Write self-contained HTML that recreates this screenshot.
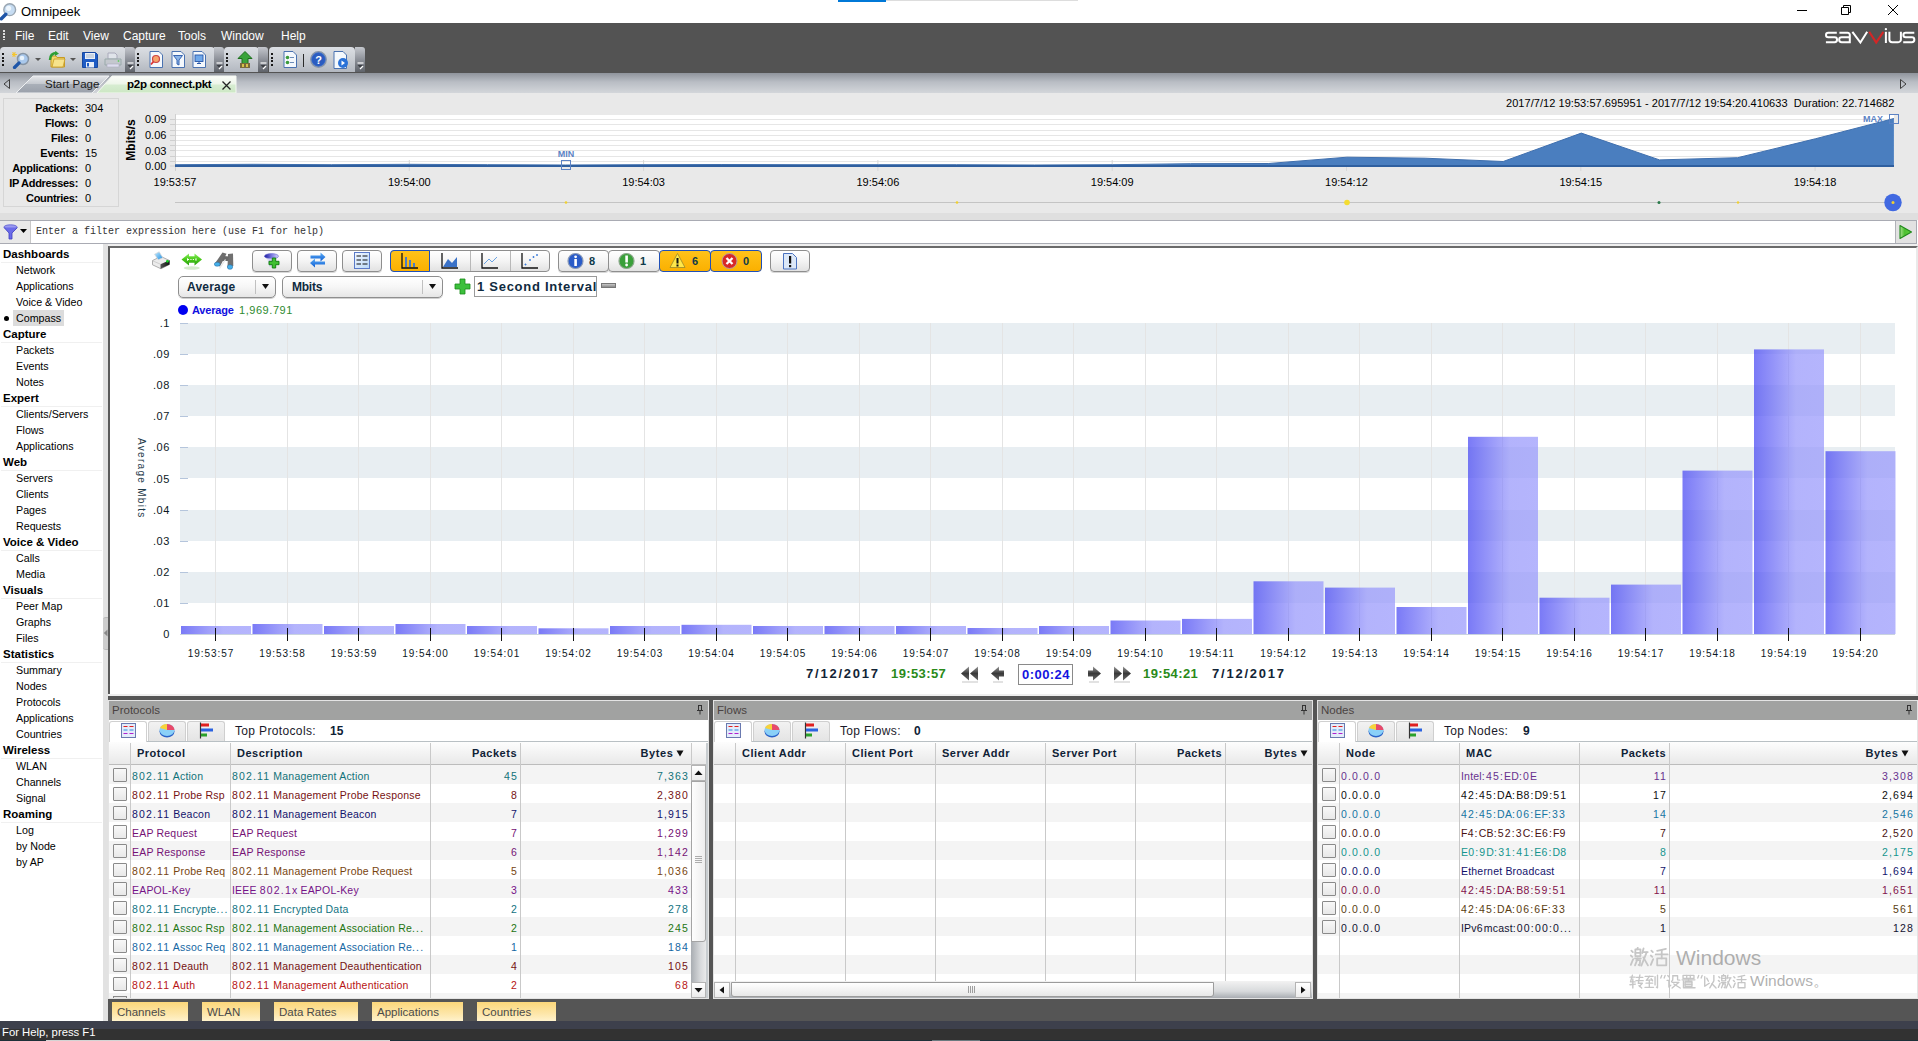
<!DOCTYPE html>
<html><head><meta charset="utf-8">
<style>
*{margin:0;padding:0;box-sizing:border-box}
html,body{width:1918px;height:1041px;overflow:hidden;background:#fff;font-family:"Liberation Sans",sans-serif;font-size:12px;color:#000;position:relative}
.a{position:absolute}
.t{position:absolute;white-space:nowrap;line-height:1}
#title{left:0;top:0;width:1918px;height:23px;background:#fff}
#menu{left:0;top:23px;width:1918px;height:24px;background:#535353;color:#fff;font-size:12px}
#tool{left:0;top:47px;width:1918px;height:26px;background:#535353}
.tg{position:absolute;top:0;height:25px;border-radius:4px 4px 0 0;background:linear-gradient(#dcdfe4,#c9cdd3 50%,#b3b8c0)}
.tgo{position:absolute;top:0;height:25px;width:10px;border-radius:0 3px 0 0;background:linear-gradient(#c4c7cd,#8d9199 50%,#5f636a)}
#tabs{left:0;top:73px;width:1918px;height:20px;background:linear-gradient(#8f949c,#b9bdc4 45%,#d3d6da)}
#summ{left:0;top:93px;width:1918px;height:127px;background:#e9e9e9}
#filt{left:0;top:220px;width:1917px;height:24px;background:#fff;border:1px solid #a9abb3;border-left:none}
#nav{left:0;top:244px;width:103px;height:777px;background:#fff}
#split{left:103px;top:244px;width:5px;height:777px;background:#e2e2e2}
#dash{left:108px;top:246px;width:1810px;height:450px;background:#fff;border-left:2px solid #5a5a5a;border-top:2px solid #6a6a6a;border-right:2px solid #eaeaea}
#status{left:0;top:1021px;width:1918px;height:20px;background:linear-gradient(#3d404c 0,#3d404c 8px,#323232 8px);color:#fff;font-size:12px}
</style></head><body>
<!-- TITLE -->
<div id="title" class="a">
  <svg class="a" style="left:0;top:1px" width="18" height="20" viewBox="0 0 18 20">
    <circle cx="9.7" cy="8.7" r="5.9" fill="#c6dcf2" stroke="#9aa6b2" stroke-width="1.4"/>
    <circle cx="8.6" cy="7.3" r="2.6" fill="#eef6fd"/>
    <path d="M5.8 13.2L1.3 17.7" stroke="#1f56a8" stroke-width="3.4" stroke-linecap="round"/>
  </svg>
  <div class="t" style="left:21px;top:5px;font-size:13px">Omnipeek</div>
  <div class="a" style="left:838px;top:0;width:48px;height:2px;background:#0078d7"></div>
  <div class="a" style="left:886px;top:0;width:192px;height:1px;background:#ddd"></div>
  <div class="a" style="left:1797px;top:10px;width:10px;height:1px;background:#000"></div>
  <svg class="a" style="left:1841px;top:4px" width="12" height="12" viewBox="0 0 12 12"><path d="M0.5 3.5h7v7h-7z M2.5 3.5v-2h7v7h-2" fill="none" stroke="#000" stroke-width="1"/></svg>
  <svg class="a" style="left:1887px;top:4px" width="12" height="12" viewBox="0 0 12 12"><path d="M1 1L11 11M11 1L1 11" stroke="#000" stroke-width="1"/></svg>
</div>
<!-- MENU -->
<div id="menu" class="a">
  <div class="a" style="left:3px;top:7px;width:2px;height:10px;background-image:repeating-linear-gradient(#ddd 0 2px,transparent 2px 3px)"></div>
  <div class="t" style="left:15px;top:7px">File</div>
  <div class="t" style="left:48px;top:7px">Edit</div>
  <div class="t" style="left:83px;top:7px">View</div>
  <div class="t" style="left:123px;top:7px">Capture</div>
  <div class="t" style="left:178px;top:7px">Tools</div>
  <div class="t" style="left:221px;top:7px">Window</div>
  <div class="t" style="left:281px;top:7px">Help</div>
  <svg class="a" style="left:1820px;top:1px" width="98" height="24" viewBox="0 0 98 24">
    <g fill="none" stroke="#fff" stroke-width="2">
      <path d="M16.8 8.7H8.3A2.3 2.3 0 0 0 8.3 13.3H14.6A2.45 2.45 0 0 1 14.6 18.2H5.9"/>
      <path d="M19.4 8.7H27.6A2.2 2.2 0 0 1 29.8 10.9V18.2H21.6A2.45 2.45 0 0 1 21.6 13.3H29.8"/>
      <path d="M32.4 7.8L40.4 18.6L47.2 7.8"/>
      <path d="M65.9 7.8V19"/>
      <path d="M69.4 7.8V15.5A2.7 2.7 0 0 0 72.1 18.2H78.2A2.7 2.7 0 0 0 80.9 15.5V7.8"/>
      <path d="M94.3 8.7H85.7A2.3 2.3 0 0 0 85.7 13.3H91.9A2.45 2.45 0 0 1 91.9 18.2H83.2"/>
    </g>
    <path d="M49.2 7.8L56.2 18.6L63.4 7.8" fill="none" stroke="#d42626" stroke-width="2.1"/>
    <circle cx="65.9" cy="5.2" r="1.15" fill="#fff"/>
  </svg>
</div>
<!-- TOOLBAR -->
<div id="tool" class="a">
  <div class="tg" style="left:0;width:126px"></div><div class="tgo" style="left:125px"><svg class="a" style="left:2px;top:15px" width="7" height="8" viewBox="0 0 7 8"><path d="M0.5 1h6" stroke="#fff" stroke-width="1.2"/><path d="M0.5 3h6l-3 3z" fill="#3c3f45"/><path d="M3 7l3-3" stroke="#fff" stroke-width="1.2"/></svg></div>
  <div class="tg" style="left:135px;width:80px"></div><div class="tgo" style="left:214px"><svg class="a" style="left:2px;top:15px" width="7" height="8" viewBox="0 0 7 8"><path d="M0.5 1h6" stroke="#fff" stroke-width="1.2"/><path d="M0.5 3h6l-3 3z" fill="#3c3f45"/><path d="M3 7l3-3" stroke="#fff" stroke-width="1.2"/></svg></div>
  <div class="tg" style="left:224px;width:35px"></div><div class="tgo" style="left:258px"><svg class="a" style="left:2px;top:15px" width="7" height="8" viewBox="0 0 7 8"><path d="M0.5 1h6" stroke="#fff" stroke-width="1.2"/><path d="M0.5 3h6l-3 3z" fill="#3c3f45"/><path d="M3 7l3-3" stroke="#fff" stroke-width="1.2"/></svg></div>
  <div class="tg" style="left:269px;width:86px"></div><div class="tgo" style="left:355px"><svg class="a" style="left:2px;top:15px" width="7" height="8" viewBox="0 0 7 8"><path d="M0.5 1h6" stroke="#fff" stroke-width="1.2"/><path d="M0.5 3h6l-3 3z" fill="#3c3f45"/><path d="M3 7l3-3" stroke="#fff" stroke-width="1.2"/></svg></div>
  <div class="a" style="left:2px;top:6px;width:2px;height:13px;background-image:repeating-linear-gradient(#1a1a1a 0 2px,transparent 2px 3.5px)"></div><div class="a" style="left:137px;top:6px;width:2px;height:13px;background-image:repeating-linear-gradient(#1a1a1a 0 2px,transparent 2px 3.5px)"></div><div class="a" style="left:226px;top:6px;width:2px;height:13px;background-image:repeating-linear-gradient(#1a1a1a 0 2px,transparent 2px 3.5px)"></div><div class="a" style="left:271px;top:6px;width:2px;height:13px;background-image:repeating-linear-gradient(#1a1a1a 0 2px,transparent 2px 3.5px)"></div>
  <svg class="a" style="left:12px;top:4px" width="19" height="18" viewBox="0 0 19 18">
    <circle cx="11" cy="8" r="5.5" fill="#a9c8ec" stroke="#8795a5" stroke-width="1.5"/><circle cx="10" cy="7" r="2.3" fill="#e9f3fc"/>
    <path d="M7 12L2.5 16.5" stroke="#1f56a8" stroke-width="3.2" stroke-linecap="round"/>
    <path d="M2 1v5M0 3.5h5M0.5 1.5l3 4M3.5 1.5l-3 4" stroke="#f6c52a" stroke-width="1"/>
  </svg>
  <svg class="a" style="left:35px;top:11px" width="6" height="4"><path d="M0 0h6l-3 3z" fill="#555"/></svg>
  <svg class="a" style="left:48px;top:4px" width="18" height="17" viewBox="0 0 18 17">
    <path d="M3 5h5l1 1.5h7.5v9.5h-13.5z" fill="#f2d86a" stroke="#c79a24" stroke-width="1"/>
    <path d="M6 8h11l-2 8h-11z" fill="#f7e38c" stroke="#c79a24" stroke-width="0.8"/>
    <path d="M2 9c0-5 3-7 7-7" stroke="#2e9e34" stroke-width="2.5" fill="none"/><path d="M7 0l4 2.5-4 2.5z" fill="#2e9e34"/>
  </svg>
  <svg class="a" style="left:70px;top:11px" width="6" height="4"><path d="M0 0h6l-3 3z" fill="#555"/></svg>
  <svg class="a" style="left:82px;top:5px" width="16" height="16" viewBox="0 0 16 16">
    <path d="M0.5 0.5h13l2 2v13h-15z" fill="#1f5cc4" stroke="#1848a0"/><rect x="3" y="1" width="10" height="6" fill="#e8eef8"/><path d="M4 3h8M4 5h8" stroke="#9ab" stroke-width="0.8"/><rect x="4" y="10" width="8" height="5.5" fill="#e8eef8"/><rect x="5" y="11" width="2" height="3.5" fill="#1f5cc4"/>
  </svg>
  <svg class="a" style="left:104px;top:5px" width="18" height="16" viewBox="0 0 18 16">
    <path d="M4 1h7l2 2v4h-9z" fill="#e0e4ea" stroke="#aab"/><path d="M1 7h16v6h-16z" fill="#c4c8ce" stroke="#9aa"/><rect x="3" y="12" width="12" height="3" fill="#dde" stroke="#aab" stroke-width="0.6"/><circle cx="14.5" cy="9" r="0.9" fill="#6c6"/>
  </svg>
  <svg class="a" style="left:148px;top:4px" width="16" height="17" viewBox="0 0 16 17"><path d="M2 0.5h9l3.5 3.5v12.5h-12.5z" fill="#f4f8fc" stroke="#4a72b0" stroke-width="1"/><circle cx="8" cy="8" r="3.5" fill="#f6a26a" stroke="#c44" stroke-width="1.2"/><path d="M5.5 10.5l-2.5 3" stroke="#d33" stroke-width="1.8"/></svg>
  <svg class="a" style="left:170px;top:4px" width="16" height="17" viewBox="0 0 16 17"><path d="M2 0.5h9l3.5 3.5v12.5h-12.5z" fill="#f4f8fc" stroke="#4a72b0" stroke-width="1"/><path d="M3.5 4.5h9l-3.5 4.5v5l-2-1v-4z" fill="#8ab4e8" stroke="#2857a8" stroke-width="0.9"/></svg>
  <svg class="a" style="left:191px;top:4px" width="16" height="17" viewBox="0 0 16 17"><path d="M2 0.5h9l3.5 3.5v12.5h-12.5z" fill="#f4f8fc" stroke="#4a72b0" stroke-width="1"/><rect x="4" y="4" width="8" height="6.5" fill="#6fa8ea" stroke="#2857a8" stroke-width="0.9"/><path d="M6 12.5h4M8 10.5v2" stroke="#2857a8" stroke-width="1"/></svg>
  <svg class="a" style="left:236px;top:4px" width="18" height="18" viewBox="0 0 18 18">
    <path d="M9 0.5l7 7h-4v5h-6v-5h-4z" fill="#3aa33a" stroke="#1d6e1d" stroke-width="1"/><rect x="4" y="12" width="10" height="5" fill="#7a6a3a"/><rect x="6" y="13" width="2" height="3" fill="#d8c24a"/><rect x="10" y="13" width="2" height="3" fill="#d8c24a"/>
  </svg>
  <svg class="a" style="left:282px;top:4px" width="16" height="17" viewBox="0 0 16 17"><path d="M2 0.5h9l3.5 3.5v12.5h-12.5z" fill="#f4f8fc" stroke="#4a72b0" stroke-width="1"/><circle cx="5.5" cy="6.5" r="1.8" fill="#3b9b3b"/><circle cx="5.5" cy="11.5" r="1.8" fill="#3b9b3b"/><path d="M8 6.5h4M8 11.5h4" stroke="#6c8cb8" stroke-width="1"/></svg>
  <div class="a" style="left:303px;top:7px;width:1px;height:13px;background:#2a2a2a"></div>
  <svg class="a" style="left:310px;top:4px" width="17" height="17" viewBox="0 0 17 17">
    <circle cx="8.5" cy="8.5" r="7.8" fill="#3b6fcf" stroke="#8a96a8" stroke-width="1.2"/><circle cx="8.5" cy="8.5" r="6.5" fill="#2c5cc0"/>
    <text x="8.5" y="13" text-anchor="middle" font-family="Liberation Sans" font-weight="bold" font-size="11" fill="#fff">?</text>
  </svg>
  <svg class="a" style="left:333px;top:4px" width="17" height="18" viewBox="0 0 17 18">
    <path d="M1 0.5h9l3.5 3.5v13.5h-12.5z" fill="#f4f8fc" stroke="#4a72b0" stroke-width="1"/><circle cx="10" cy="12" r="5" fill="#2a72d8"/><path d="M8.5 9.5l3.5 2.5-3.5 2.5z" fill="#fff"/>
  </svg>
</div>
<!-- TABS -->
<div id="tabs" class="a">
  <svg class="a" style="left:3px;top:6px" width="8" height="10" viewBox="0 0 8 10"><path d="M6.5 0.5L1 5l5.5 4.5z" fill="none" stroke="#3c3c3c" stroke-width="1"/></svg>
  <svg class="a" style="left:15px;top:2px" width="225" height="18" viewBox="0 0 225 18">
    <defs>
      <linearGradient id="gs" x1="0" y1="0" x2="0" y2="1"><stop offset="0" stop-color="#e6e8eb"/><stop offset="0.45" stop-color="#c5c9cf"/><stop offset="0.5" stop-color="#a9afb8"/><stop offset="1" stop-color="#9aa0aa"/></linearGradient>
      <linearGradient id="gp" x1="0" y1="0" x2="0" y2="1"><stop offset="0" stop-color="#fcfdfa"/><stop offset="0.45" stop-color="#eef6ea"/><stop offset="0.55" stop-color="#d6ecd0"/><stop offset="1" stop-color="#cce7c4"/></linearGradient>
    </defs>
    <path d="M1 18 L18 1 H94 L77 18 Z" fill="url(#gs)" stroke="#eef0f2" stroke-width="1"/>
    <path d="M82 18 L97 1 H221 V18 Z" fill="url(#gp)" stroke="#f4f8f2" stroke-width="1"/>
  </svg>
  <div class="t" style="left:45px;top:6px;font-size:11.5px;color:#1a1a1a">Start Page</div>
  <div class="t" style="left:127px;top:5.5px;font-size:11.5px;font-weight:bold;letter-spacing:-0.25px;color:#000">p2p connect.pkt</div>
  <svg class="a" style="left:222px;top:8px" width="9" height="9" viewBox="0 0 9 9"><path d="M0.5 0.5L8.5 8.5M8.5 0.5L0.5 8.5" stroke="#222" stroke-width="1.3"/></svg>
  <svg class="a" style="left:1899px;top:6px" width="8" height="10" viewBox="0 0 8 10"><path d="M1.5 0.5L7 5l-5.5 4.5z" fill="none" stroke="#3c3c3c" stroke-width="1"/></svg>
</div>
<!-- SUMMARY -->
<div id="summ" class="a">
  <div class="a" style="left:3px;top:5px;width:116px;height:109px;border:1px solid #d6d6d6"></div>
  <div class="t" style="left:0;top:10px;width:78px;text-align:right;font-weight:bold;font-size:11px;letter-spacing:-0.3px">Packets:</div><div class="t" style="left:85px;top:10px;font-size:11px">304</div><div class="t" style="left:0;top:25px;width:78px;text-align:right;font-weight:bold;font-size:11px;letter-spacing:-0.3px">Flows:</div><div class="t" style="left:85px;top:25px;font-size:11px">0</div><div class="t" style="left:0;top:40px;width:78px;text-align:right;font-weight:bold;font-size:11px;letter-spacing:-0.3px">Files:</div><div class="t" style="left:85px;top:40px;font-size:11px">0</div><div class="t" style="left:0;top:55px;width:78px;text-align:right;font-weight:bold;font-size:11px;letter-spacing:-0.3px">Events:</div><div class="t" style="left:85px;top:55px;font-size:11px">15</div><div class="t" style="left:0;top:70px;width:78px;text-align:right;font-weight:bold;font-size:11px;letter-spacing:-0.3px">Applications:</div><div class="t" style="left:85px;top:70px;font-size:11px">0</div><div class="t" style="left:0;top:85px;width:78px;text-align:right;font-weight:bold;font-size:11px;letter-spacing:-0.3px">IP Addresses:</div><div class="t" style="left:85px;top:85px;font-size:11px">0</div><div class="t" style="left:0;top:100px;width:78px;text-align:right;font-weight:bold;font-size:11px;letter-spacing:-0.3px">Countries:</div><div class="t" style="left:85px;top:100px;font-size:11px">0</div>
  <div class="a" style="left:0;top:120px;width:1918px;height:7px;background:#dfdfdf"></div>
  <div class="t" style="left:108px;top:41px;transform:rotate(-90deg);transform-origin:center;width:46px;text-align:center;font-weight:bold;font-size:12px">Mbits/s</div>
  <div class="t" style="left:145px;top:21px;font-size:11px">0.09</div>
  <div class="t" style="left:145px;top:37px;font-size:11px">0.06</div>
  <div class="t" style="left:145px;top:53px;font-size:11px">0.03</div>
  <div class="t" style="left:145px;top:68px;font-size:11px">0.00</div>
  <div class="t" style="left:153.5px;top:84px;width:43px;text-align:center;font-size:11px">19:53:57</div><div class="t" style="left:387.8px;top:84px;width:43px;text-align:center;font-size:11px">19:54:00</div><div class="t" style="left:622.1px;top:84px;width:43px;text-align:center;font-size:11px">19:54:03</div><div class="t" style="left:856.4px;top:84px;width:43px;text-align:center;font-size:11px">19:54:06</div><div class="t" style="left:1090.7px;top:84px;width:43px;text-align:center;font-size:11px">19:54:09</div><div class="t" style="left:1325.0px;top:84px;width:43px;text-align:center;font-size:11px">19:54:12</div><div class="t" style="left:1559.3px;top:84px;width:43px;text-align:center;font-size:11px">19:54:15</div><div class="t" style="left:1793.6px;top:84px;width:43px;text-align:center;font-size:11px">19:54:18</div>
  <div class="t" style="left:1506px;top:5px;font-size:11px;letter-spacing:0.05px">2017/7/12 19:53:57.695951 - 2017/7/12 19:54:20.410633 &nbsp;Duration: 22.714682</div>
  <svg class="a" style="left:0;top:-93px" width="1918" height="220" viewBox="0 0 1918 220">
    <rect x="175" y="115" width="1719" height="51" fill="#fff"/>
    <path d="M175 119.5H1894" stroke="#e6e6e6" stroke-width="1"/><path d="M175 124.5H1894" stroke="#e6e6e6" stroke-width="1"/><path d="M175 130.5H1894" stroke="#e6e6e6" stroke-width="1"/><path d="M175 135.5H1894" stroke="#e6e6e6" stroke-width="1"/><path d="M175 140.5H1894" stroke="#e6e6e6" stroke-width="1"/><path d="M175 145.5H1894" stroke="#e6e6e6" stroke-width="1"/><path d="M175 150.5H1894" stroke="#e6e6e6" stroke-width="1"/><path d="M175 156.5H1894" stroke="#e6e6e6" stroke-width="1"/><path d="M175 161.5H1894" stroke="#e6e6e6" stroke-width="1"/>
    <path d="M175.5 114V171" stroke="#d0d0d0" stroke-width="1"/>
    <path d="M170 119.5H176" stroke="#cfcfcf" stroke-width="1"/><path d="M170 124.5H176" stroke="#cfcfcf" stroke-width="1"/><path d="M170 130.5H176" stroke="#cfcfcf" stroke-width="1"/><path d="M170 135.5H176" stroke="#cfcfcf" stroke-width="1"/><path d="M170 140.5H176" stroke="#cfcfcf" stroke-width="1"/><path d="M170 145.5H176" stroke="#cfcfcf" stroke-width="1"/><path d="M170 150.5H176" stroke="#cfcfcf" stroke-width="1"/><path d="M170 156.5H176" stroke="#cfcfcf" stroke-width="1"/><path d="M170 161.5H176" stroke="#cfcfcf" stroke-width="1"/><path d="M170 166.0H176" stroke="#cfcfcf" stroke-width="1"/><path d="M409.3 160V171" stroke="#d8d8d8" stroke-width="1"/><path d="M643.6 160V171" stroke="#d8d8d8" stroke-width="1"/><path d="M877.9 160V171" stroke="#d8d8d8" stroke-width="1"/><path d="M1112.2 160V171" stroke="#d8d8d8" stroke-width="1"/><path d="M1346.5 160V171" stroke="#d8d8d8" stroke-width="1"/><path d="M1580.8 160V171" stroke="#d8d8d8" stroke-width="1"/><path d="M1815.1 160V171" stroke="#d8d8d8" stroke-width="1"/>
    <polygon points="175,166 175.0,164.7 253.1,164.3 331.3,164.7 409.4,164.3 487.5,164.7 565.6,165.0 643.8,164.7 721.9,164.5 800.0,164.7 878.2,164.7 956.3,164.7 1034.4,165.0 1112.6,164.7 1190.7,163.7 1268.8,163.5 1346.9,157.2 1425.1,158.2 1503.2,161.5 1581.3,133.1 1659.5,159.9 1737.6,157.7 1815.7,138.7 1893.9,118.5 1893.9,166" fill="#4a7ebf"/>
    <polyline points="175.0,164.7 253.1,164.3 331.3,164.7 409.4,164.3 487.5,164.7 565.6,165.0 643.8,164.7 721.9,164.5 800.0,164.7 878.2,164.7 956.3,164.7 1034.4,165.0 1112.6,164.7 1190.7,163.7 1268.8,163.5 1346.9,157.2 1425.1,158.2 1503.2,161.5 1581.3,133.1 1659.5,159.9 1737.6,157.7 1815.7,138.7 1893.9,118.5" fill="none" stroke="#3f6fae" stroke-width="1"/>
    <path d="M175 166H1894" stroke="#2f5f9f" stroke-width="2"/>
    <path d="M175 202.5H1893" stroke="#c4c4c4" stroke-width="1"/>
    <rect x="561.5" y="160.5" width="9" height="9" fill="none" stroke="#5b82c4" stroke-width="1"/>
    <text x="566" y="157" text-anchor="middle" font-family="Liberation Sans" font-size="9" font-weight="bold" fill="#5b82c4">MIN</text>
    <rect x="1889.5" y="114.5" width="9" height="9" fill="none" stroke="#5b82c4" stroke-width="1"/>
    <text x="1873" y="122" text-anchor="middle" font-family="Liberation Sans" font-size="9" font-weight="bold" fill="#5b82c4">MAX</text>
    <circle cx="566" cy="202.5" r="1.3" fill="#f0d030"/>
    <circle cx="957" cy="202.5" r="1.3" fill="#f0d030"/>
    <circle cx="1347" cy="202.5" r="2.8" fill="#f4dc30"/>
    <circle cx="1659" cy="202.5" r="1.5" fill="#2a7a4a"/>
    <circle cx="1738" cy="202.5" r="1.2" fill="#f0d030"/>
    <circle cx="1893" cy="202.5" r="8.7" fill="#4169e1"/>
    <circle cx="1893" cy="202.5" r="1.5" fill="#f0d030"/>
  </svg>
</div>
<!-- FILTER -->
<div id="filt" class="a">
  <div class="a" style="left:0;top:0;width:31px;height:22px;background:#e9e9e9;border-right:1px solid #c8c8c8"></div>
  <svg class="a" style="left:3px;top:3px" width="26" height="16" viewBox="0 0 26 16">
    <ellipse cx="7.5" cy="3" rx="6.5" ry="2.2" fill="#9a9af0" stroke="#5a5ad0" stroke-width="0.8"/>
    <path d="M1 3.5L6 9v6h3V9l5.5-5.5" fill="#6b6be8" stroke="#3c3cc0" stroke-width="0.8"/>
    <path d="M17 5h7l-3.5 4z" fill="#000"/>
  </svg>
  <div class="t" style="left:36px;top:6px;font-family:'Liberation Mono',monospace;font-size:10px;color:#333">Enter a filter expression here (use F1 for help)</div>
  <div class="a" style="left:1895px;top:0;width:21px;height:22px;background:#e2e2e2;border-left:1px solid #b0b2b8"></div>
  <svg class="a" style="left:1898px;top:3px" width="16" height="16" viewBox="0 0 16 16"><defs><linearGradient id="pg" x1="0" x2="1"><stop offset="0" stop-color="#a8e090"/><stop offset="0.4" stop-color="#4cc030"/><stop offset="1" stop-color="#60d040"/></linearGradient></defs><path d="M2 1.5L13.5 8L2 14.5z" fill="url(#pg)" stroke="#1f8a1a" stroke-width="1.1" stroke-linejoin="round"/></svg>
</div>
<div class="a" style="left:0;top:244px;width:1918px;height:2px;background:#efefef"></div>
<div id="nav" class="a"><div class="t" style="left:3px;top:5px;font-size:11.5px;font-weight:bold">Dashboards</div><div class="a" style="left:1px;top:18px;width:101px;height:1px;background:#f0f0f0"></div><div class="t" style="left:16px;top:21px;font-size:10.7px">Network</div><div class="t" style="left:16px;top:37px;font-size:10.7px">Applications</div><div class="t" style="left:16px;top:53px;font-size:10.7px">Voice &amp; Video</div><div class="a" style="left:13px;top:66px;width:51px;height:16px;background:#dcdcdc"></div><div class="a" style="left:4px;top:72px;width:5px;height:5px;border-radius:50%;background:#000"></div><div class="t" style="left:16px;top:69px;font-size:10.7px">Compass</div><div class="t" style="left:3px;top:85px;font-size:11.5px;font-weight:bold">Capture</div><div class="a" style="left:1px;top:98px;width:101px;height:1px;background:#f0f0f0"></div><div class="t" style="left:16px;top:101px;font-size:10.7px">Packets</div><div class="t" style="left:16px;top:117px;font-size:10.7px">Events</div><div class="t" style="left:16px;top:133px;font-size:10.7px">Notes</div><div class="t" style="left:3px;top:149px;font-size:11.5px;font-weight:bold">Expert</div><div class="a" style="left:1px;top:162px;width:101px;height:1px;background:#f0f0f0"></div><div class="t" style="left:16px;top:165px;font-size:10.7px">Clients/Servers</div><div class="t" style="left:16px;top:181px;font-size:10.7px">Flows</div><div class="t" style="left:16px;top:197px;font-size:10.7px">Applications</div><div class="t" style="left:3px;top:213px;font-size:11.5px;font-weight:bold">Web</div><div class="a" style="left:1px;top:226px;width:101px;height:1px;background:#f0f0f0"></div><div class="t" style="left:16px;top:229px;font-size:10.7px">Servers</div><div class="t" style="left:16px;top:245px;font-size:10.7px">Clients</div><div class="t" style="left:16px;top:261px;font-size:10.7px">Pages</div><div class="t" style="left:16px;top:277px;font-size:10.7px">Requests</div><div class="t" style="left:3px;top:293px;font-size:11.5px;font-weight:bold">Voice &amp; Video</div><div class="a" style="left:1px;top:306px;width:101px;height:1px;background:#f0f0f0"></div><div class="t" style="left:16px;top:309px;font-size:10.7px">Calls</div><div class="t" style="left:16px;top:325px;font-size:10.7px">Media</div><div class="t" style="left:3px;top:341px;font-size:11.5px;font-weight:bold">Visuals</div><div class="a" style="left:1px;top:354px;width:101px;height:1px;background:#f0f0f0"></div><div class="t" style="left:16px;top:357px;font-size:10.7px">Peer Map</div><div class="t" style="left:16px;top:373px;font-size:10.7px">Graphs</div><div class="t" style="left:16px;top:389px;font-size:10.7px">Files</div><div class="t" style="left:3px;top:405px;font-size:11.5px;font-weight:bold">Statistics</div><div class="a" style="left:1px;top:418px;width:101px;height:1px;background:#f0f0f0"></div><div class="t" style="left:16px;top:421px;font-size:10.7px">Summary</div><div class="t" style="left:16px;top:437px;font-size:10.7px">Nodes</div><div class="t" style="left:16px;top:453px;font-size:10.7px">Protocols</div><div class="t" style="left:16px;top:469px;font-size:10.7px">Applications</div><div class="t" style="left:16px;top:485px;font-size:10.7px">Countries</div><div class="t" style="left:3px;top:501px;font-size:11.5px;font-weight:bold">Wireless</div><div class="a" style="left:1px;top:514px;width:101px;height:1px;background:#f0f0f0"></div><div class="t" style="left:16px;top:517px;font-size:10.7px">WLAN</div><div class="t" style="left:16px;top:533px;font-size:10.7px">Channels</div><div class="t" style="left:16px;top:549px;font-size:10.7px">Signal</div><div class="t" style="left:3px;top:565px;font-size:11.5px;font-weight:bold">Roaming</div><div class="a" style="left:1px;top:578px;width:101px;height:1px;background:#f0f0f0"></div><div class="t" style="left:16px;top:581px;font-size:10.7px">Log</div><div class="t" style="left:16px;top:597px;font-size:10.7px">by Node</div><div class="t" style="left:16px;top:613px;font-size:10.7px">by AP</div></div>
<div id="split" class="a"><div class="a" style="left:0;top:373px;width:5px;height:33px;border-radius:3px 0 0 3px;background:#cdcdcd;border-top:1px solid #b8b8b8;border-bottom:1px solid #b8b8b8"></div><svg class="a" style="left:0;top:385px" width="5" height="8"><path d="M4.5 0.5L0.8 4l3.7 3.5z" fill="#888"/></svg></div>
<div id="dash" class="a"></div>
<!-- DASH -->
<svg class="a" style="left:0;top:0" width="1918" height="700" viewBox="0 0 1918 700">
<defs><linearGradient id="bg" x1="0" y1="0" x2="1" y2="0"><stop offset="0" stop-color="rgb(70,70,243)" stop-opacity="0.72"/><stop offset="0.6" stop-color="rgb(150,150,251)" stop-opacity="0.72"/><stop offset="1" stop-color="rgb(152,152,252)" stop-opacity="0.72"/></linearGradient></defs>
<rect x="180" y="572" width="1715" height="31" fill="#e8eef2"/><rect x="180" y="510" width="1715" height="31" fill="#e8eef2"/><rect x="180" y="447" width="1715" height="31" fill="#e8eef2"/><rect x="180" y="385" width="1715" height="31" fill="#e8eef2"/><rect x="180" y="323" width="1715" height="31" fill="#e8eef2"/><path d="M215.5 323V634" stroke="#e4e4e4" stroke-width="1"/><path d="M287.5 323V634" stroke="#e4e4e4" stroke-width="1"/><path d="M358.5 323V634" stroke="#e4e4e4" stroke-width="1"/><path d="M430.5 323V634" stroke="#e4e4e4" stroke-width="1"/><path d="M501.5 323V634" stroke="#e4e4e4" stroke-width="1"/><path d="M573.5 323V634" stroke="#e4e4e4" stroke-width="1"/><path d="M644.5 323V634" stroke="#e4e4e4" stroke-width="1"/><path d="M716.5 323V634" stroke="#e4e4e4" stroke-width="1"/><path d="M787.5 323V634" stroke="#e4e4e4" stroke-width="1"/><path d="M859.5 323V634" stroke="#e4e4e4" stroke-width="1"/><path d="M930.5 323V634" stroke="#e4e4e4" stroke-width="1"/><path d="M1002.5 323V634" stroke="#e4e4e4" stroke-width="1"/><path d="M1073.5 323V634" stroke="#e4e4e4" stroke-width="1"/><path d="M1145.5 323V634" stroke="#e4e4e4" stroke-width="1"/><path d="M1216.5 323V634" stroke="#e4e4e4" stroke-width="1"/><path d="M1288.5 323V634" stroke="#e4e4e4" stroke-width="1"/><path d="M1359.5 323V634" stroke="#e4e4e4" stroke-width="1"/><path d="M1431.5 323V634" stroke="#e4e4e4" stroke-width="1"/><path d="M1502.5 323V634" stroke="#e4e4e4" stroke-width="1"/><path d="M1574.5 323V634" stroke="#e4e4e4" stroke-width="1"/><path d="M1645.5 323V634" stroke="#e4e4e4" stroke-width="1"/><path d="M1717.5 323V634" stroke="#e4e4e4" stroke-width="1"/><path d="M1788.5 323V634" stroke="#e4e4e4" stroke-width="1"/><path d="M1860.5 323V634" stroke="#e4e4e4" stroke-width="1"/><path d="M180 634.5H188" stroke="#b5c5dc" stroke-width="1"/><path d="M180 603.5H188" stroke="#b5c5dc" stroke-width="1"/><path d="M180 572.5H188" stroke="#b5c5dc" stroke-width="1"/><path d="M180 541.5H188" stroke="#b5c5dc" stroke-width="1"/><path d="M180 510.5H188" stroke="#b5c5dc" stroke-width="1"/><path d="M180 478.5H188" stroke="#b5c5dc" stroke-width="1"/><path d="M180 447.5H188" stroke="#b5c5dc" stroke-width="1"/><path d="M180 416.5H188" stroke="#b5c5dc" stroke-width="1"/><path d="M180 385.5H188" stroke="#b5c5dc" stroke-width="1"/><path d="M180 354.5H188" stroke="#b5c5dc" stroke-width="1"/><path d="M180 323.5H188" stroke="#b5c5dc" stroke-width="1"/><rect x="181.0" y="626.0" width="70.0" height="8.0" fill="url(#bg)"/><rect x="252.5" y="624.0" width="70.0" height="10.0" fill="url(#bg)"/><rect x="324.0" y="626.0" width="70.0" height="8.0" fill="url(#bg)"/><rect x="395.5" y="624.0" width="70.0" height="10.0" fill="url(#bg)"/><rect x="467.0" y="626.0" width="70.0" height="8.0" fill="url(#bg)"/><rect x="538.5" y="628.3" width="70.0" height="5.7" fill="url(#bg)"/><rect x="610.0" y="626.0" width="70.0" height="8.0" fill="url(#bg)"/><rect x="681.5" y="624.8" width="70.0" height="9.2" fill="url(#bg)"/><rect x="753.0" y="626.0" width="70.0" height="8.0" fill="url(#bg)"/><rect x="824.5" y="626.0" width="70.0" height="8.0" fill="url(#bg)"/><rect x="896.0" y="626.0" width="70.0" height="8.0" fill="url(#bg)"/><rect x="967.5" y="628.0" width="70.0" height="6.0" fill="url(#bg)"/><rect x="1039.0" y="626.0" width="70.0" height="8.0" fill="url(#bg)"/><rect x="1110.5" y="620.5" width="70.0" height="13.5" fill="url(#bg)"/><rect x="1182.0" y="618.9" width="70.0" height="15.1" fill="url(#bg)"/><rect x="1253.5" y="581.3" width="70.0" height="52.7" fill="url(#bg)"/><rect x="1325.0" y="587.6" width="70.0" height="46.4" fill="url(#bg)"/><rect x="1396.5" y="607.0" width="70.0" height="27.0" fill="url(#bg)"/><rect x="1468.0" y="436.8" width="70.0" height="197.2" fill="url(#bg)"/><rect x="1539.5" y="597.7" width="70.0" height="36.3" fill="url(#bg)"/><rect x="1611.0" y="584.6" width="70.0" height="49.4" fill="url(#bg)"/><rect x="1682.5" y="470.6" width="70.0" height="163.4" fill="url(#bg)"/><rect x="1754.0" y="349.4" width="70.0" height="284.6" fill="url(#bg)"/><rect x="1825.5" y="451.2" width="70.0" height="182.8" fill="url(#bg)"/><path d="M180 634.5H1895" stroke="#c9d3df" stroke-width="1"/><path d="M215.5 628V641" stroke="#111" stroke-width="1"/><path d="M287.5 628V641" stroke="#111" stroke-width="1"/><path d="M358.5 628V641" stroke="#111" stroke-width="1"/><path d="M430.5 628V641" stroke="#111" stroke-width="1"/><path d="M501.5 628V641" stroke="#111" stroke-width="1"/><path d="M573.5 628V641" stroke="#111" stroke-width="1"/><path d="M644.5 628V641" stroke="#111" stroke-width="1"/><path d="M716.5 628V641" stroke="#111" stroke-width="1"/><path d="M787.5 628V641" stroke="#111" stroke-width="1"/><path d="M859.5 628V641" stroke="#111" stroke-width="1"/><path d="M930.5 628V641" stroke="#111" stroke-width="1"/><path d="M1002.5 628V641" stroke="#111" stroke-width="1"/><path d="M1073.5 628V641" stroke="#111" stroke-width="1"/><path d="M1145.5 628V641" stroke="#111" stroke-width="1"/><path d="M1216.5 628V641" stroke="#111" stroke-width="1"/><path d="M1288.5 628V641" stroke="#111" stroke-width="1"/><path d="M1359.5 628V641" stroke="#111" stroke-width="1"/><path d="M1431.5 628V641" stroke="#111" stroke-width="1"/><path d="M1502.5 628V641" stroke="#111" stroke-width="1"/><path d="M1574.5 628V641" stroke="#111" stroke-width="1"/><path d="M1645.5 628V641" stroke="#111" stroke-width="1"/><path d="M1717.5 628V641" stroke="#111" stroke-width="1"/><path d="M1788.5 628V641" stroke="#111" stroke-width="1"/><path d="M1860.5 628V641" stroke="#111" stroke-width="1"/></svg>
<div class="t" style="left:121.0px;top:629.0px;font-size:11px;letter-spacing:0.6px;color:#0c1824;width:49px;text-align:right;">0</div>
<div class="t" style="left:121.0px;top:597.9px;font-size:11px;letter-spacing:0.6px;color:#0c1824;width:49px;text-align:right;">.01</div>
<div class="t" style="left:121.0px;top:566.8px;font-size:11px;letter-spacing:0.6px;color:#0c1824;width:49px;text-align:right;">.02</div>
<div class="t" style="left:121.0px;top:535.7px;font-size:11px;letter-spacing:0.6px;color:#0c1824;width:49px;text-align:right;">.03</div>
<div class="t" style="left:121.0px;top:504.6px;font-size:11px;letter-spacing:0.6px;color:#0c1824;width:49px;text-align:right;">.04</div>
<div class="t" style="left:121.0px;top:473.5px;font-size:11px;letter-spacing:0.6px;color:#0c1824;width:49px;text-align:right;">.05</div>
<div class="t" style="left:121.0px;top:442.4px;font-size:11px;letter-spacing:0.6px;color:#0c1824;width:49px;text-align:right;">.06</div>
<div class="t" style="left:121.0px;top:411.3px;font-size:11px;letter-spacing:0.6px;color:#0c1824;width:49px;text-align:right;">.07</div>
<div class="t" style="left:121.0px;top:380.2px;font-size:11px;letter-spacing:0.6px;color:#0c1824;width:49px;text-align:right;">.08</div>
<div class="t" style="left:121.0px;top:349.1px;font-size:11px;letter-spacing:0.6px;color:#0c1824;width:49px;text-align:right;">.09</div>
<div class="t" style="left:121.0px;top:318.0px;font-size:11px;letter-spacing:0.6px;color:#0c1824;width:49px;text-align:right;">.1</div>
<div class="t" style="left:181.0px;top:649.0px;font-size:10px;letter-spacing:0.95px;color:#0c1824;width:60px;text-align:center;">19:53:57</div>
<div class="t" style="left:252.5px;top:649.0px;font-size:10px;letter-spacing:0.95px;color:#0c1824;width:60px;text-align:center;">19:53:58</div>
<div class="t" style="left:324.0px;top:649.0px;font-size:10px;letter-spacing:0.95px;color:#0c1824;width:60px;text-align:center;">19:53:59</div>
<div class="t" style="left:395.5px;top:649.0px;font-size:10px;letter-spacing:0.95px;color:#0c1824;width:60px;text-align:center;">19:54:00</div>
<div class="t" style="left:467.0px;top:649.0px;font-size:10px;letter-spacing:0.95px;color:#0c1824;width:60px;text-align:center;">19:54:01</div>
<div class="t" style="left:538.5px;top:649.0px;font-size:10px;letter-spacing:0.95px;color:#0c1824;width:60px;text-align:center;">19:54:02</div>
<div class="t" style="left:610.0px;top:649.0px;font-size:10px;letter-spacing:0.95px;color:#0c1824;width:60px;text-align:center;">19:54:03</div>
<div class="t" style="left:681.5px;top:649.0px;font-size:10px;letter-spacing:0.95px;color:#0c1824;width:60px;text-align:center;">19:54:04</div>
<div class="t" style="left:753.0px;top:649.0px;font-size:10px;letter-spacing:0.95px;color:#0c1824;width:60px;text-align:center;">19:54:05</div>
<div class="t" style="left:824.5px;top:649.0px;font-size:10px;letter-spacing:0.95px;color:#0c1824;width:60px;text-align:center;">19:54:06</div>
<div class="t" style="left:896.0px;top:649.0px;font-size:10px;letter-spacing:0.95px;color:#0c1824;width:60px;text-align:center;">19:54:07</div>
<div class="t" style="left:967.5px;top:649.0px;font-size:10px;letter-spacing:0.95px;color:#0c1824;width:60px;text-align:center;">19:54:08</div>
<div class="t" style="left:1039.0px;top:649.0px;font-size:10px;letter-spacing:0.95px;color:#0c1824;width:60px;text-align:center;">19:54:09</div>
<div class="t" style="left:1110.5px;top:649.0px;font-size:10px;letter-spacing:0.95px;color:#0c1824;width:60px;text-align:center;">19:54:10</div>
<div class="t" style="left:1182.0px;top:649.0px;font-size:10px;letter-spacing:0.95px;color:#0c1824;width:60px;text-align:center;">19:54:11</div>
<div class="t" style="left:1253.5px;top:649.0px;font-size:10px;letter-spacing:0.95px;color:#0c1824;width:60px;text-align:center;">19:54:12</div>
<div class="t" style="left:1325.0px;top:649.0px;font-size:10px;letter-spacing:0.95px;color:#0c1824;width:60px;text-align:center;">19:54:13</div>
<div class="t" style="left:1396.5px;top:649.0px;font-size:10px;letter-spacing:0.95px;color:#0c1824;width:60px;text-align:center;">19:54:14</div>
<div class="t" style="left:1468.0px;top:649.0px;font-size:10px;letter-spacing:0.95px;color:#0c1824;width:60px;text-align:center;">19:54:15</div>
<div class="t" style="left:1539.5px;top:649.0px;font-size:10px;letter-spacing:0.95px;color:#0c1824;width:60px;text-align:center;">19:54:16</div>
<div class="t" style="left:1611.0px;top:649.0px;font-size:10px;letter-spacing:0.95px;color:#0c1824;width:60px;text-align:center;">19:54:17</div>
<div class="t" style="left:1682.5px;top:649.0px;font-size:10px;letter-spacing:0.95px;color:#0c1824;width:60px;text-align:center;">19:54:18</div>
<div class="t" style="left:1754.0px;top:649.0px;font-size:10px;letter-spacing:0.95px;color:#0c1824;width:60px;text-align:center;">19:54:19</div>
<div class="t" style="left:1825.5px;top:649.0px;font-size:10px;letter-spacing:0.95px;color:#0c1824;width:60px;text-align:center;">19:54:20</div>
<div class="t" style="left:102px;top:472px;width:78px;text-align:center;transform:rotate(90deg);font-size:10px;letter-spacing:1.3px;color:#1f3b4b">Average Mbits</div>
<svg class="a" style="left:152px;top:251px" width="19" height="19" viewBox="0 0 19 19"><defs><linearGradient id="ppr" x1="0" y1="0" x2="1" y2="1"><stop offset="0" stop-color="#c8ecff"/><stop offset="1" stop-color="#1f8ee0"/></linearGradient><linearGradient id="pdk" x1="0" y1="0" x2="1" y2="0"><stop offset="0" stop-color="#555"/><stop offset="1" stop-color="#111"/></linearGradient></defs><path d="M0.5 9.5L9 5.5L17.5 9.5V13.5L9 17.8L0.5 13.8Z" fill="#ececec" stroke="#9a9a9a" stroke-width="0.8"/><path d="M8.5 13.2L17.5 9.3V13.6L8.5 17.8Z" fill="url(#pdk)"/><path d="M2.5 3.2L7.2 0.8L10.8 6.8L6.2 8.8Z" fill="url(#ppr)" stroke="#d8d8d8" stroke-width="0.7"/><path d="M1 10L8.5 13.2" stroke="#bbb" stroke-width="0.6"/><circle cx="15.4" cy="10.3" r="1.4" fill="#10d020"/></svg>
<svg class="a" style="left:181px;top:253px" width="22" height="18" viewBox="0 0 22 18"><defs><linearGradient id="gar" x1="0" y1="0" x2="0" y2="1"><stop offset="0" stop-color="#8af060"/><stop offset="0.5" stop-color="#48c818"/><stop offset="1" stop-color="#2aa010"/></linearGradient></defs><path d="M0.5 6.5L8 0.5V3.2H13.5V0.5L21 6.5L13.5 12.5V9.8H8V12.5Z" fill="url(#gar)"/><path d="M6.5 5.3V7.7M15 5.3V7.7" stroke="#fff" stroke-width="1"/><path d="M7 6.5H14.5" stroke="#fff" stroke-width="1.2" stroke-dasharray="1.1 1.3"/><ellipse cx="10.75" cy="15" rx="8" ry="1.8" fill="#b8dca8" opacity="0.6"/></svg>
<svg class="a" style="left:214px;top:252px" width="20" height="18" viewBox="0 0 20 18"><path d="M8.5 0.5L12.5 1.8L6 14.5L0.5 12Z" fill="#6e6e6e"/><path d="M14 2L19 1.5L19.3 14L13.5 15.5Z" fill="#707070"/><path d="M10 4L15 4.5L14 9L8 9Z" fill="#6a6a6a"/><path d="M5.5 16.5L11.5 7.5" stroke="#e6e6e6" stroke-width="1.3"/><ellipse cx="3.2" cy="12.2" rx="2.9" ry="2" fill="#45b0ea" stroke="#2a6aa0" stroke-width="0.5"/><ellipse cx="16" cy="15" rx="2.7" ry="2.3" fill="#45b0ea" stroke="#2a6aa0" stroke-width="0.5"/></svg>
<div class="a" style="left:252px;top:250px;width:40px;height:22px;border-radius:4px;border:1px solid #8e8e8e;background:linear-gradient(#ffffff,#f4f4f4 50%,#e2e2e2);box-shadow:0 1px 0 #d8d8d8"></div>
<div class="a" style="left:297px;top:250px;width:40px;height:22px;border-radius:4px;border:1px solid #8e8e8e;background:linear-gradient(#ffffff,#f4f4f4 50%,#e2e2e2);box-shadow:0 1px 0 #d8d8d8"></div>
<div class="a" style="left:342px;top:250px;width:40px;height:22px;border-radius:4px;border:1px solid #8e8e8e;background:linear-gradient(#ffffff,#f4f4f4 50%,#e2e2e2);box-shadow:0 1px 0 #d8d8d8"></div>
<svg class="a" style="left:263px;top:253px" width="20" height="18" viewBox="0 0 20 18"><defs><linearGradient id="fun" x1="0" y1="0" x2="1" y2="0"><stop offset="0" stop-color="#1a1aa0"/><stop offset="0.6" stop-color="#8a8ae8"/><stop offset="1" stop-color="#d8d8f8"/></linearGradient></defs><ellipse cx="8.5" cy="3.2" rx="7" ry="2.6" fill="url(#fun)" stroke="#6a6ad0" stroke-width="0.6"/><path d="M4 5.5Q6 10 6.5 14L9 13.5Q10 9 13 5.5" fill="#c8c8f0" opacity="0.7"/><path d="M9.3 5h3.4v3.3h3.3v3.4h-3.3v3.3h-3.4v-3.3h-3.3v-3.4h3.3z" fill="#40c030" stroke="#0f7a0f" stroke-width="0.9"/></svg>
<svg class="a" style="left:308px;top:252px" width="20" height="17" viewBox="0 0 20 17"><defs><linearGradient id="swp" x1="0" y1="0" x2="0" y2="1"><stop offset="0" stop-color="#60b0f8"/><stop offset="1" stop-color="#0a5ad0"/></linearGradient></defs><path d="M2.5 3.5h10v-3l5 4.5-5 4.5v-3h-10z" fill="url(#swp)"/><path d="M17 9.5h-10v-3l-5 4.5 5 4.5v-3h10z" fill="url(#swp)"/></svg>
<svg class="a" style="left:353px;top:252px" width="18" height="18" viewBox="0 0 18 18"><defs><linearGradient id="lst" x1="0" y1="0" x2="1" y2="1"><stop offset="0" stop-color="#f4f8ff"/><stop offset="1" stop-color="#b8d8f8"/></linearGradient></defs><rect x="1.5" y="0.5" width="15" height="16" fill="url(#lst)" stroke="#5a7ac8" stroke-width="1"/><path d="M3.5 4h4.5M9.5 4h5M3.5 8h4.5M9.5 8h5M3.5 12h4.5M9.5 12h5" stroke="#111" stroke-width="1.1"/></svg>
<div class="a" style="left:390px;top:250px;width:160px;height:22px;border-radius:4px;border:1px solid #8e8e8e;background:linear-gradient(#ffffff,#f4f4f4 50%,#e2e2e2)"></div>
<div class="a" style="left:390px;top:250px;width:40px;height:22px;border-radius:4px 0 0 4px;border:1px solid #2050b8;background:linear-gradient(#ffc21a,#fbb000)"></div>
<div class="a" style="left:470px;top:251px;width:1px;height:20px;background:#b8b8b8"></div>
<div class="a" style="left:510px;top:251px;width:1px;height:20px;background:#b8b8b8"></div>
<svg class="a" style="left:400px;top:252px" width="20" height="18" viewBox="0 0 20 18"><path d="M2 1v15h16" fill="none" stroke="#111" stroke-width="1.3"/><path d="M5 5h2v10h-2zM9 8h2v7h-2zM13 11h2v4h-2z" fill="#4a7cc8"/></svg>
<svg class="a" style="left:440px;top:252px" width="20" height="18" viewBox="0 0 20 18"><path d="M2 1v15h16" fill="none" stroke="#111" stroke-width="1.3"/><path d="M3 15l5-8 4 4 5-6v10z" fill="#3a72c8"/></svg>
<svg class="a" style="left:480px;top:252px" width="20" height="18" viewBox="0 0 20 18"><path d="M2 1v15h16" fill="none" stroke="#111" stroke-width="1.3"/><path d="M4 12l5-5 3 3 5-5" fill="none" stroke="#5a9ae0" stroke-width="0.9"/></svg>
<svg class="a" style="left:520px;top:252px" width="20" height="18" viewBox="0 0 20 18"><path d="M2 1v15h16" fill="none" stroke="#111" stroke-width="1.3"/><path d="M4.5 12.5h2M5.5 11.5v2M9 8h2M10 7v2M12.5 5h2M13.5 4v2M16 3h2M17 2v2" stroke="#3a7ad8" stroke-width="0.9"/></svg>
<div class="a" style="left:558px;top:250px;width:51px;height:22px;border-radius:4px;border:1px solid #8e8e8e;background:linear-gradient(#ffffff,#f4f4f4 50%,#e2e2e2);box-shadow:0 1px 0 #d8d8d8"></div>
<div class="a" style="left:608px;top:250px;width:52px;height:22px;border-radius:4px;border:1px solid #8e8e8e;background:linear-gradient(#ffffff,#f4f4f4 50%,#e2e2e2);box-shadow:0 1px 0 #d8d8d8"></div>
<div class="a" style="left:659px;top:250px;width:52px;height:22px;border-radius:4px;border:1px solid #2050b8;background:linear-gradient(#ffc21a,#fbb000)"></div>
<div class="a" style="left:710px;top:250px;width:52px;height:22px;border-radius:4px;border:1px solid #2050b8;background:linear-gradient(#ffc21a,#fbb000)"></div>
<svg class="a" style="left:567px;top:252px" width="17" height="18" viewBox="0 0 17 18"><circle cx="8.5" cy="9" r="7.5" fill="#2a5cc8" stroke="#8a9ab8" stroke-width="1.2"/><rect x="7.3" y="7" width="2.6" height="7" fill="#fff"/><circle cx="8.6" cy="4.8" r="1.4" fill="#fff"/></svg>
<div class="t" style="left:589.0px;top:255.5px;font-size:11px;font-weight:bold;color:#0e3a4a;">8</div>
<svg class="a" style="left:618px;top:252px" width="17" height="18" viewBox="0 0 17 18"><circle cx="8.5" cy="9" r="7.5" fill="#3aa03a" stroke="#8aa88a" stroke-width="1.2"/><rect x="7.3" y="3.5" width="2.6" height="7" fill="#fff"/><circle cx="8.6" cy="13" r="1.4" fill="#fff"/></svg>
<div class="t" style="left:640.0px;top:255.5px;font-size:11px;font-weight:bold;color:#0e3a4a;">1</div>
<svg class="a" style="left:669px;top:252px" width="17" height="18" viewBox="0 0 17 18"><path d="M8.5 1.5l7.5 14h-15z" fill="#ffe84a" stroke="#9a8a2a" stroke-width="0.8"/><rect x="7.5" y="6" width="2" height="5.5" fill="#111"/><rect x="7.5" y="12.5" width="2" height="2" fill="#111"/></svg>
<div class="t" style="left:692.0px;top:255.5px;font-size:11px;font-weight:bold;color:#0e3a4a;">6</div>
<svg class="a" style="left:721px;top:252px" width="17" height="18" viewBox="0 0 17 18"><circle cx="8.5" cy="9" r="7.5" fill="#d82828" stroke="#b8a0a0" stroke-width="1"/><path d="M5.5 6l6 6M11.5 6l-6 6" stroke="#fff" stroke-width="2.3"/></svg>
<div class="t" style="left:743.0px;top:255.5px;font-size:11px;font-weight:bold;color:#0e3a4a;">0</div>
<div class="a" style="left:770px;top:250px;width:40px;height:22px;border-radius:4px;border:1px solid #8e8e8e;background:linear-gradient(#ffffff,#f4f4f4 50%,#e2e2e2);box-shadow:0 1px 0 #d8d8d8"></div>
<svg class="a" style="left:782px;top:252px" width="16" height="18" viewBox="0 0 16 18"><path d="M1.5 1.5h9l4 4v11.5h-13z" fill="#dce8f8" stroke="#4a72c0" stroke-width="1"/><rect x="7" y="4" width="2.2" height="7.5" fill="#111"/><rect x="7" y="13" width="2.2" height="2.2" fill="#111"/></svg>
<div class="a" style="left:178px;top:276px;width:98px;height:22px;border-radius:5px;border:1px solid #8e8e8e;background:linear-gradient(#ffffff,#f6f6f6 50%,#e6e6e6);box-shadow:0 1px 0 #d0d0d0"></div>
<div class="a" style="left:255px;top:280px;width:1px;height:14px;background:#c0c0c0"></div>
<svg class="a" style="left:262px;top:284px" width="7" height="6" viewBox="0 0 7 6"><path d="M0 0h7l-3.5 5z" fill="#111"/></svg>
<div class="t" style="left:187.0px;top:280.5px;font-size:12px;font-weight:bold;letter-spacing:0.2px;color:#0f2a40;">Average</div>
<div class="a" style="left:282px;top:276px;width:161px;height:22px;border-radius:5px;border:1px solid #8e8e8e;background:linear-gradient(#ffffff,#f6f6f6 50%,#e6e6e6);box-shadow:0 1px 0 #d0d0d0"></div>
<div class="a" style="left:422px;top:280px;width:1px;height:14px;background:#c0c0c0"></div>
<svg class="a" style="left:429px;top:284px" width="7" height="6" viewBox="0 0 7 6"><path d="M0 0h7l-3.5 5z" fill="#111"/></svg>
<div class="t" style="left:292.0px;top:280.5px;font-size:12px;font-weight:bold;letter-spacing:-0.25px;color:#0f2a40;">Mbits</div>
<svg class="a" style="left:454px;top:278px" width="17" height="17" viewBox="0 0 17 17"><path d="M6 1h5v5h5v5h-5v5h-5v-5h-5v-5h5z" fill="#3cc03c" stroke="#1a8a1a" stroke-width="0.8"/></svg>
<div class="a" style="left:474px;top:276px;width:123px;height:21px;border:1px solid #9a9a9a;background:#fff"></div>
<div class="t" style="left:477.0px;top:279.5px;font-size:13px;font-weight:bold;letter-spacing:0.73px;color:#0f2a40;">1 Second Interval</div>
<div class="a" style="left:601px;top:283px;width:15px;height:5px;border:1px solid #777;background:linear-gradient(#c8c8c8,#8a8a8a)"></div>
<div class="a" style="left:178px;top:305px;width:10px;height:10px;border-radius:50%;background:#0000f0"></div>
<div class="t" style="left:192.0px;top:304.5px;font-size:11px;font-weight:bold;letter-spacing:-0.2px;color:#1010e0;">Average</div>
<div class="t" style="left:239.0px;top:304.5px;font-size:11px;letter-spacing:0.55px;color:#2e8a2e;">1,969.791</div>
<div class="t" style="left:806.0px;top:666.5px;font-size:13px;font-weight:bold;letter-spacing:1.78px;color:#122436;">7/12/2017</div>
<div class="t" style="left:891.0px;top:666.5px;font-size:13px;font-weight:bold;letter-spacing:0.4px;color:#2a8a1a;">19:53:57</div>
<svg class="a" style="left:960px;top:664px" width="22" height="20" viewBox="0 0 22 20"><defs><linearGradient id="ag" x1="0" y1="0" x2="0" y2="1"><stop offset="0" stop-color="#9a9a9a"/><stop offset="0.5" stop-color="#3a3a3a"/><stop offset="1" stop-color="#6a6a6a"/></linearGradient></defs><path d="M1 9.5l8-7v14z M10 9.5l8-7v14z" fill="url(#ag)"/><path d="M2 18h16" stroke="#d8d8d8" stroke-width="1.5"/></svg>
<svg class="a" style="left:990px;top:664px" width="16" height="20" viewBox="0 0 16 20"><path d="M1 9.5l8-7v4h5v6h-5v4z" fill="url(#ag)"/><path d="M3 18h10" stroke="#d8d8d8" stroke-width="1.5"/></svg>
<div class="a" style="left:1018px;top:664px;width:55px;height:21px;border:1px solid #8a8a8a;background:#fff"></div>
<div class="t" style="left:1022.0px;top:667.5px;font-size:13px;font-weight:bold;letter-spacing:0.45px;color:#1414e0;">0:00:24</div>
<svg class="a" style="left:1086px;top:664px" width="16" height="20" viewBox="0 0 16 20"><path d="M15 9.5l-8-7v4h-5v6h5v4z" fill="url(#ag)"/><path d="M3 18h10" stroke="#d8d8d8" stroke-width="1.5"/></svg>
<svg class="a" style="left:1110px;top:664px" width="22" height="20" viewBox="0 0 22 20"><path d="M21 9.5l-8-7v14z M12 9.5l-8-7v14z" fill="url(#ag)"/><path d="M4 18h16" stroke="#d8d8d8" stroke-width="1.5"/></svg>
<div class="t" style="left:1143.0px;top:666.5px;font-size:13px;font-weight:bold;letter-spacing:0.4px;color:#2a8a1a;">19:54:21</div>
<div class="t" style="left:1212.0px;top:666.5px;font-size:13px;font-weight:bold;letter-spacing:1.78px;color:#122436;">7/12/2017</div>
<!-- /DASH -->
<!-- BOTTOM -->
<div class="a" style="left:108px;top:694px;width:1810px;height:2px;background:#eeeeee"></div>
<div class="a" style="left:108px;top:696px;width:1810px;height:325px;background:#555555"></div>
<div class="a" style="left:108px;top:700px;width:601px;height:299px;background:#fff;border:1px solid #e4e4e4"></div>
<div class="a" style="left:109px;top:701px;width:599px;height:19px;background:#a1a2a1"></div>
<div class="t" style="left:112.0px;top:704.8px;font-size:11.5px;color:#4a4242;">Protocols</div>
<svg class="a" style="left:696px;top:705px" width="8" height="10" viewBox="0 0 8 10"><path d="M2 0.5h4M2.5 0.5v5M5.5 0.5v5M1 5.5h6M4 5.5v4" stroke="#333" stroke-width="1" fill="none"/></svg>
<div class="a" style="left:109px;top:741px;width:599px;height:1px;background:#b9c0c4"></div>
<div class="a" style="left:109px;top:721px;width:38px;height:21px;background:#fff;border:1px solid #d0d0d0;border-bottom:none;border-radius:3px 3px 0 0"></div>
<div class="a" style="left:148px;top:721px;width:38px;height:20px;background:linear-gradient(#f2f2f2,#e4e4e4);border:1px solid #cfcfcf;border-bottom:none;border-radius:3px 3px 0 0"></div>
<div class="a" style="left:187px;top:721px;width:38px;height:20px;background:linear-gradient(#f2f2f2,#e4e4e4);border:1px solid #cfcfcf;border-bottom:none;border-radius:3px 3px 0 0"></div>
<svg class="a" style="left:121px;top:723px" width="16" height="16" viewBox="0 0 16 16"><rect x="0.5" y="0.5" width="14" height="14" fill="#e4ecfa" stroke="#6a7ab0" stroke-width="1"/><path d="M2.5 3.5h4M8.5 3.5h4" stroke="#e02020" stroke-width="1.2"/><path d="M2.5 7h4M8.5 7h4" stroke="#2a8ae0" stroke-width="1.2"/><path d="M2.5 10.5h4M8.5 10.5h4" stroke="#b020d0" stroke-width="1.2"/></svg>
<svg class="a" style="left:159px;top:722px" width="17" height="17" viewBox="0 0 17 17"><ellipse cx="8" cy="9.5" rx="7.5" ry="6" fill="#2a62c8"/><ellipse cx="8" cy="8" rx="7.5" ry="6" fill="#8ad0f8"/><path d="M8 8V2A7.5 6 0 0 1 15.5 8z" fill="#e84a6a"/><path d="M8 8V2A7.5 6 0 0 0 1 6z" fill="#f8d23a"/></svg>
<svg class="a" style="left:199px;top:722px" width="15" height="17" viewBox="0 0 15 17"><path d="M1.5 0.5v16" stroke="#333" stroke-width="1.2"/><rect x="2" y="1.5" width="8" height="3" fill="#e02020"/><rect x="2" y="6.5" width="12" height="3" fill="#2a62e0"/><rect x="2" y="11.5" width="6" height="3" fill="#2aa02a"/></svg>
<div class="t" style="left:235.0px;top:725.0px;font-size:12px;letter-spacing:0.35px;color:#1a1a2a;">Top Protocols:</div>
<div class="t" style="left:330.0px;top:725.0px;font-size:12px;font-weight:bold;color:#0f2236;">15</div>
<div class="a" style="left:109px;top:742px;width:599px;height:23px;background:linear-gradient(#fdfdfd,#f1f1f1 60%,#e9e9e9);border-bottom:1px solid #bcbcbc"></div>
<div class="a" style="left:109px;top:765px;width:599px;height:19px;background:#f4f4f4"></div>
<div class="a" style="left:109px;top:784px;width:599px;height:19px;background:#fff"></div>
<div class="a" style="left:109px;top:803px;width:599px;height:19px;background:#f4f4f4"></div>
<div class="a" style="left:109px;top:822px;width:599px;height:19px;background:#fff"></div>
<div class="a" style="left:109px;top:841px;width:599px;height:19px;background:#f4f4f4"></div>
<div class="a" style="left:109px;top:860px;width:599px;height:19px;background:#fff"></div>
<div class="a" style="left:109px;top:879px;width:599px;height:19px;background:#f4f4f4"></div>
<div class="a" style="left:109px;top:898px;width:599px;height:19px;background:#fff"></div>
<div class="a" style="left:109px;top:917px;width:599px;height:19px;background:#f4f4f4"></div>
<div class="a" style="left:109px;top:936px;width:599px;height:19px;background:#fff"></div>
<div class="a" style="left:109px;top:955px;width:599px;height:19px;background:#f4f4f4"></div>
<div class="a" style="left:109px;top:974px;width:599px;height:19px;background:#fff"></div>
<div class="a" style="left:109px;top:993px;width:599px;height:5px;background:#f4f4f4"></div>
<div class="a" style="left:130px;top:743px;width:1px;height:255px;background:#c9c9c9"></div>
<div class="a" style="left:230px;top:743px;width:1px;height:255px;background:#c9c9c9"></div>
<div class="a" style="left:430px;top:743px;width:1px;height:255px;background:#c9c9c9"></div>
<div class="a" style="left:520px;top:743px;width:1px;height:255px;background:#c9c9c9"></div>
<div class="t" style="left:137.0px;top:747.5px;font-size:11px;font-weight:bold;letter-spacing:0.5px;color:#0f2236;">Protocol</div>
<div class="t" style="left:237.0px;top:747.5px;font-size:11px;font-weight:bold;letter-spacing:0.5px;color:#0f2236;">Description</div>
<div class="t" style="left:367.0px;top:747.5px;font-size:11px;font-weight:bold;letter-spacing:0.5px;color:#0f2236;width:150px;text-align:right;">Packets</div>
<div class="t" style="left:523.5px;top:747.5px;font-size:11px;font-weight:bold;letter-spacing:0.5px;color:#0f2236;letter-spacing:0.6px;width:150px;text-align:right;">Bytes</div>
<svg class="a" style="left:676px;top:750px" width="8" height="7" viewBox="0 0 8 7"><path d="M0.5 0.5h7l-3.5 6z" fill="#111"/></svg>
<div class="a" style="left:113px;top:768px;width:14px;height:14px;background:linear-gradient(#f8f8f8,#e8e8e8);border:1px solid #8a8a8a;border-radius:1px"></div>
<div class="t" style="left:132.0px;top:770.8px;font-size:10.5px;color:#117279;"><span style="letter-spacing:1.15px">802.11</span><span style="letter-spacing:0.2px"> Action</span></div>
<div class="t" style="left:232.0px;top:770.8px;font-size:10.5px;color:#117279;"><span style="letter-spacing:1.15px">802.11</span><span style="letter-spacing:0.2px"> Management Action</span></div>
<div class="t" style="left:318.0px;top:770.8px;font-size:10.5px;color:#117279;width:200px;text-align:right;"><span style="letter-spacing:1.15px">45</span></div>
<div class="t" style="left:489.0px;top:770.8px;font-size:10.5px;color:#117279;width:200px;text-align:right;"><span style="letter-spacing:1.15px">7,363</span></div>
<div class="a" style="left:113px;top:787px;width:14px;height:14px;background:linear-gradient(#f8f8f8,#e8e8e8);border:1px solid #8a8a8a;border-radius:1px"></div>
<div class="t" style="left:132.0px;top:789.8px;font-size:10.5px;color:#771212;"><span style="letter-spacing:1.15px">802.11</span><span style="letter-spacing:0.2px"> Probe Rsp</span></div>
<div class="t" style="left:232.0px;top:789.8px;font-size:10.5px;color:#771212;"><span style="letter-spacing:1.15px">802.11</span><span style="letter-spacing:0.2px"> Management Probe Response</span></div>
<div class="t" style="left:318.0px;top:789.8px;font-size:10.5px;color:#771212;width:200px;text-align:right;"><span style="letter-spacing:1.15px">8</span></div>
<div class="t" style="left:489.0px;top:789.8px;font-size:10.5px;color:#771212;width:200px;text-align:right;"><span style="letter-spacing:1.15px">2,380</span></div>
<div class="a" style="left:113px;top:806px;width:14px;height:14px;background:linear-gradient(#f8f8f8,#e8e8e8);border:1px solid #8a8a8a;border-radius:1px"></div>
<div class="t" style="left:132.0px;top:808.8px;font-size:10.5px;color:#12126b;"><span style="letter-spacing:1.15px">802.11</span><span style="letter-spacing:0.2px"> Beacon</span></div>
<div class="t" style="left:232.0px;top:808.8px;font-size:10.5px;color:#12126b;"><span style="letter-spacing:1.15px">802.11</span><span style="letter-spacing:0.2px"> Management Beacon</span></div>
<div class="t" style="left:318.0px;top:808.8px;font-size:10.5px;color:#12126b;width:200px;text-align:right;"><span style="letter-spacing:1.15px">7</span></div>
<div class="t" style="left:489.0px;top:808.8px;font-size:10.5px;color:#12126b;width:200px;text-align:right;"><span style="letter-spacing:1.15px">1,915</span></div>
<div class="a" style="left:113px;top:825px;width:14px;height:14px;background:linear-gradient(#f8f8f8,#e8e8e8);border:1px solid #8a8a8a;border-radius:1px"></div>
<div class="t" style="left:132.0px;top:827.8px;font-size:10.5px;color:#751275;"><span style="letter-spacing:0.2px">EAP Request</span></div>
<div class="t" style="left:232.0px;top:827.8px;font-size:10.5px;color:#751275;"><span style="letter-spacing:0.2px">EAP Request</span></div>
<div class="t" style="left:318.0px;top:827.8px;font-size:10.5px;color:#751275;width:200px;text-align:right;"><span style="letter-spacing:1.15px">7</span></div>
<div class="t" style="left:489.0px;top:827.8px;font-size:10.5px;color:#751275;width:200px;text-align:right;"><span style="letter-spacing:1.15px">1,299</span></div>
<div class="a" style="left:113px;top:844px;width:14px;height:14px;background:linear-gradient(#f8f8f8,#e8e8e8);border:1px solid #8a8a8a;border-radius:1px"></div>
<div class="t" style="left:132.0px;top:846.8px;font-size:10.5px;color:#751275;"><span style="letter-spacing:0.2px">EAP Response</span></div>
<div class="t" style="left:232.0px;top:846.8px;font-size:10.5px;color:#751275;"><span style="letter-spacing:0.2px">EAP Response</span></div>
<div class="t" style="left:318.0px;top:846.8px;font-size:10.5px;color:#751275;width:200px;text-align:right;"><span style="letter-spacing:1.15px">6</span></div>
<div class="t" style="left:489.0px;top:846.8px;font-size:10.5px;color:#751275;width:200px;text-align:right;"><span style="letter-spacing:1.15px">1,142</span></div>
<div class="a" style="left:113px;top:863px;width:14px;height:14px;background:linear-gradient(#f8f8f8,#e8e8e8);border:1px solid #8a8a8a;border-radius:1px"></div>
<div class="t" style="left:132.0px;top:865.8px;font-size:10.5px;color:#78450f;"><span style="letter-spacing:1.15px">802.11</span><span style="letter-spacing:0.2px"> Probe Req</span></div>
<div class="t" style="left:232.0px;top:865.8px;font-size:10.5px;color:#78450f;"><span style="letter-spacing:1.15px">802.11</span><span style="letter-spacing:0.2px"> Management Probe Request</span></div>
<div class="t" style="left:318.0px;top:865.8px;font-size:10.5px;color:#78450f;width:200px;text-align:right;"><span style="letter-spacing:1.15px">5</span></div>
<div class="t" style="left:489.0px;top:865.8px;font-size:10.5px;color:#78450f;width:200px;text-align:right;"><span style="letter-spacing:1.15px">1,036</span></div>
<div class="a" style="left:113px;top:882px;width:14px;height:14px;background:linear-gradient(#f8f8f8,#e8e8e8);border:1px solid #8a8a8a;border-radius:1px"></div>
<div class="t" style="left:132.0px;top:884.8px;font-size:10.5px;color:#751288;"><span style="letter-spacing:0.2px">EAPOL-Key</span></div>
<div class="t" style="left:232.0px;top:884.8px;font-size:10.5px;color:#751288;"><span style="letter-spacing:0.2px">IEEE </span><span style="letter-spacing:1.15px">802.1</span><span style="letter-spacing:0.2px">x EAPOL-Key</span></div>
<div class="t" style="left:318.0px;top:884.8px;font-size:10.5px;color:#751288;width:200px;text-align:right;"><span style="letter-spacing:1.15px">3</span></div>
<div class="t" style="left:489.0px;top:884.8px;font-size:10.5px;color:#751288;width:200px;text-align:right;"><span style="letter-spacing:1.15px">433</span></div>
<div class="a" style="left:113px;top:901px;width:14px;height:14px;background:linear-gradient(#f8f8f8,#e8e8e8);border:1px solid #8a8a8a;border-radius:1px"></div>
<div class="t" style="left:132.0px;top:903.8px;font-size:10.5px;color:#127382;"><span style="letter-spacing:1.15px">802.11</span><span style="letter-spacing:0.2px"> Encrypte</span><span style="letter-spacing:1.15px">...</span></div>
<div class="t" style="left:232.0px;top:903.8px;font-size:10.5px;color:#127382;"><span style="letter-spacing:1.15px">802.11</span><span style="letter-spacing:0.2px"> Encrypted Data</span></div>
<div class="t" style="left:318.0px;top:903.8px;font-size:10.5px;color:#127382;width:200px;text-align:right;"><span style="letter-spacing:1.15px">2</span></div>
<div class="t" style="left:489.0px;top:903.8px;font-size:10.5px;color:#127382;width:200px;text-align:right;"><span style="letter-spacing:1.15px">278</span></div>
<div class="a" style="left:113px;top:920px;width:14px;height:14px;background:linear-gradient(#f8f8f8,#e8e8e8);border:1px solid #8a8a8a;border-radius:1px"></div>
<div class="t" style="left:132.0px;top:922.8px;font-size:10.5px;color:#237512;"><span style="letter-spacing:1.15px">802.11</span><span style="letter-spacing:0.2px"> Assoc Rsp</span></div>
<div class="t" style="left:232.0px;top:922.8px;font-size:10.5px;color:#237512;"><span style="letter-spacing:1.15px">802.11</span><span style="letter-spacing:0.2px"> Management Association Re</span><span style="letter-spacing:1.15px">...</span></div>
<div class="t" style="left:318.0px;top:922.8px;font-size:10.5px;color:#237512;width:200px;text-align:right;"><span style="letter-spacing:1.15px">2</span></div>
<div class="t" style="left:489.0px;top:922.8px;font-size:10.5px;color:#237512;width:200px;text-align:right;"><span style="letter-spacing:1.15px">245</span></div>
<div class="a" style="left:113px;top:939px;width:14px;height:14px;background:linear-gradient(#f8f8f8,#e8e8e8);border:1px solid #8a8a8a;border-radius:1px"></div>
<div class="t" style="left:132.0px;top:941.8px;font-size:10.5px;color:#1667a3;"><span style="letter-spacing:1.15px">802.11</span><span style="letter-spacing:0.2px"> Assoc Req</span></div>
<div class="t" style="left:232.0px;top:941.8px;font-size:10.5px;color:#1667a3;"><span style="letter-spacing:1.15px">802.11</span><span style="letter-spacing:0.2px"> Management Association Re</span><span style="letter-spacing:1.15px">...</span></div>
<div class="t" style="left:318.0px;top:941.8px;font-size:10.5px;color:#1667a3;width:200px;text-align:right;"><span style="letter-spacing:1.15px">1</span></div>
<div class="t" style="left:489.0px;top:941.8px;font-size:10.5px;color:#1667a3;width:200px;text-align:right;"><span style="letter-spacing:1.15px">184</span></div>
<div class="a" style="left:113px;top:958px;width:14px;height:14px;background:linear-gradient(#f8f8f8,#e8e8e8);border:1px solid #8a8a8a;border-radius:1px"></div>
<div class="t" style="left:132.0px;top:960.8px;font-size:10.5px;color:#751212;"><span style="letter-spacing:1.15px">802.11</span><span style="letter-spacing:0.2px"> Deauth</span></div>
<div class="t" style="left:232.0px;top:960.8px;font-size:10.5px;color:#751212;"><span style="letter-spacing:1.15px">802.11</span><span style="letter-spacing:0.2px"> Management Deauthentication</span></div>
<div class="t" style="left:318.0px;top:960.8px;font-size:10.5px;color:#751212;width:200px;text-align:right;"><span style="letter-spacing:1.15px">4</span></div>
<div class="t" style="left:489.0px;top:960.8px;font-size:10.5px;color:#751212;width:200px;text-align:right;"><span style="letter-spacing:1.15px">105</span></div>
<div class="a" style="left:113px;top:977px;width:14px;height:14px;background:linear-gradient(#f8f8f8,#e8e8e8);border:1px solid #8a8a8a;border-radius:1px"></div>
<div class="t" style="left:132.0px;top:979.8px;font-size:10.5px;color:#b71414;"><span style="letter-spacing:1.15px">802.11</span><span style="letter-spacing:0.2px"> Auth</span></div>
<div class="t" style="left:232.0px;top:979.8px;font-size:10.5px;color:#b71414;"><span style="letter-spacing:1.15px">802.11</span><span style="letter-spacing:0.2px"> Management Authentication</span></div>
<div class="t" style="left:318.0px;top:979.8px;font-size:10.5px;color:#b71414;width:200px;text-align:right;"><span style="letter-spacing:1.15px">2</span></div>
<div class="t" style="left:489.0px;top:979.8px;font-size:10.5px;color:#b71414;width:200px;text-align:right;"><span style="letter-spacing:1.15px">68</span></div>
<div class="a" style="left:113px;top:996px;width:14px;height:2px;background:#e8e8e8;border:1px solid #8a8a8a;border-bottom:none"></div>
<div class="a" style="left:691px;top:743px;width:1px;height:22px;background:#c9c9c9"></div>
<div class="a" style="left:691px;top:765px;width:16px;height:233px;background:linear-gradient(90deg,#a9adb2,#d8dadc 60%,#ececec)"></div>
<div class="a" style="left:706px;top:743px;width:2px;height:255px;background:#c8cdd0"></div>
<div class="a" style="left:691px;top:765px;width:15px;height:16px;background:linear-gradient(#ffffff,#ececec);border:1px solid #b4b4b4"></div>
<svg class="a" style="left:693px;top:769px" width="11" height="8" viewBox="0 0 11 8"><path d="M5.5 1.5l4 4.5h-8z" fill="#111"/></svg>
<div class="a" style="left:691px;top:781px;width:15px;height:161px;background:linear-gradient(90deg,#fdfdfd,#ededed);border:1px solid #a4a4a4;border-radius:0 0 3px 0"></div>
<svg class="a" style="left:694px;top:855px" width="9" height="9" viewBox="0 0 9 9"><path d="M1 1.5h7M1 3.5h7M1 5.5h7M1 7.5h7" stroke="#999" stroke-width="0.8"/></svg>
<div class="a" style="left:691px;top:982px;width:15px;height:16px;background:linear-gradient(#ffffff,#ececec);border:1px solid #b4b4b4"></div>
<svg class="a" style="left:693px;top:986px" width="11" height="8" viewBox="0 0 11 8"><path d="M5.5 6.5l4-4.5h-8z" fill="#111"/></svg>
<div class="a" style="left:713px;top:700px;width:600px;height:299px;background:#fff;border:1px solid #e4e4e4"></div>
<div class="a" style="left:714px;top:701px;width:598px;height:19px;background:#a1a2a1"></div>
<div class="t" style="left:717.0px;top:704.8px;font-size:11.5px;color:#4a4242;">Flows</div>
<svg class="a" style="left:1300px;top:705px" width="8" height="10" viewBox="0 0 8 10"><path d="M2 0.5h4M2.5 0.5v5M5.5 0.5v5M1 5.5h6M4 5.5v4" stroke="#333" stroke-width="1" fill="none"/></svg>
<div class="a" style="left:714px;top:741px;width:598px;height:1px;background:#b9c0c4"></div>
<div class="a" style="left:714px;top:721px;width:38px;height:21px;background:#fff;border:1px solid #d0d0d0;border-bottom:none;border-radius:3px 3px 0 0"></div>
<div class="a" style="left:753px;top:721px;width:38px;height:20px;background:linear-gradient(#f2f2f2,#e4e4e4);border:1px solid #cfcfcf;border-bottom:none;border-radius:3px 3px 0 0"></div>
<div class="a" style="left:792px;top:721px;width:38px;height:20px;background:linear-gradient(#f2f2f2,#e4e4e4);border:1px solid #cfcfcf;border-bottom:none;border-radius:3px 3px 0 0"></div>
<svg class="a" style="left:726px;top:723px" width="16" height="16" viewBox="0 0 16 16"><rect x="0.5" y="0.5" width="14" height="14" fill="#e4ecfa" stroke="#6a7ab0" stroke-width="1"/><path d="M2.5 3.5h4M8.5 3.5h4" stroke="#e02020" stroke-width="1.2"/><path d="M2.5 7h4M8.5 7h4" stroke="#2a8ae0" stroke-width="1.2"/><path d="M2.5 10.5h4M8.5 10.5h4" stroke="#b020d0" stroke-width="1.2"/></svg>
<svg class="a" style="left:764px;top:722px" width="17" height="17" viewBox="0 0 17 17"><ellipse cx="8" cy="9.5" rx="7.5" ry="6" fill="#2a62c8"/><ellipse cx="8" cy="8" rx="7.5" ry="6" fill="#8ad0f8"/><path d="M8 8V2A7.5 6 0 0 1 15.5 8z" fill="#e84a6a"/><path d="M8 8V2A7.5 6 0 0 0 1 6z" fill="#f8d23a"/></svg>
<svg class="a" style="left:804px;top:722px" width="15" height="17" viewBox="0 0 15 17"><path d="M1.5 0.5v16" stroke="#333" stroke-width="1.2"/><rect x="2" y="1.5" width="8" height="3" fill="#e02020"/><rect x="2" y="6.5" width="12" height="3" fill="#2a62e0"/><rect x="2" y="11.5" width="6" height="3" fill="#2aa02a"/></svg>
<div class="t" style="left:840.0px;top:725.0px;font-size:12px;letter-spacing:0.35px;color:#1a1a2a;">Top Flows:</div>
<div class="t" style="left:914.0px;top:725.0px;font-size:12px;font-weight:bold;color:#0f2236;">0</div>
<div class="a" style="left:714px;top:742px;width:598px;height:23px;background:linear-gradient(#fdfdfd,#f1f1f1 60%,#e9e9e9);border-bottom:1px solid #bcbcbc"></div>
<div class="a" style="left:714px;top:765px;width:598px;height:19px;background:#f4f4f4"></div>
<div class="a" style="left:714px;top:784px;width:598px;height:19px;background:#fff"></div>
<div class="a" style="left:714px;top:803px;width:598px;height:19px;background:#f4f4f4"></div>
<div class="a" style="left:714px;top:822px;width:598px;height:19px;background:#fff"></div>
<div class="a" style="left:714px;top:841px;width:598px;height:19px;background:#f4f4f4"></div>
<div class="a" style="left:714px;top:860px;width:598px;height:19px;background:#fff"></div>
<div class="a" style="left:714px;top:879px;width:598px;height:19px;background:#f4f4f4"></div>
<div class="a" style="left:714px;top:898px;width:598px;height:19px;background:#fff"></div>
<div class="a" style="left:714px;top:917px;width:598px;height:19px;background:#f4f4f4"></div>
<div class="a" style="left:714px;top:936px;width:598px;height:19px;background:#fff"></div>
<div class="a" style="left:714px;top:955px;width:598px;height:19px;background:#f4f4f4"></div>
<div class="a" style="left:714px;top:974px;width:598px;height:7px;background:#fff"></div>
<div class="a" style="left:735px;top:743px;width:1px;height:238px;background:#c9c9c9"></div>
<div class="a" style="left:845px;top:743px;width:1px;height:238px;background:#c9c9c9"></div>
<div class="a" style="left:935px;top:743px;width:1px;height:238px;background:#c9c9c9"></div>
<div class="a" style="left:1045px;top:743px;width:1px;height:238px;background:#c9c9c9"></div>
<div class="a" style="left:1135px;top:743px;width:1px;height:238px;background:#c9c9c9"></div>
<div class="a" style="left:1225px;top:743px;width:1px;height:238px;background:#c9c9c9"></div>
<div class="t" style="left:742.0px;top:747.5px;font-size:11px;font-weight:bold;letter-spacing:0.5px;color:#0f2236;">Client Addr</div>
<div class="t" style="left:852.0px;top:747.5px;font-size:11px;font-weight:bold;letter-spacing:0.5px;color:#0f2236;">Client Port</div>
<div class="t" style="left:942.0px;top:747.5px;font-size:11px;font-weight:bold;letter-spacing:0.5px;color:#0f2236;">Server Addr</div>
<div class="t" style="left:1052.0px;top:747.5px;font-size:11px;font-weight:bold;letter-spacing:0.5px;color:#0f2236;">Server Port</div>
<div class="t" style="left:1072.0px;top:747.5px;font-size:11px;font-weight:bold;letter-spacing:0.5px;color:#0f2236;width:150px;text-align:right;">Packets</div>
<div class="t" style="left:1147.5px;top:747.5px;font-size:11px;font-weight:bold;letter-spacing:0.5px;color:#0f2236;letter-spacing:0.6px;width:150px;text-align:right;">Bytes</div>
<svg class="a" style="left:1300px;top:750px" width="8" height="7" viewBox="0 0 8 7"><path d="M0.5 0.5h7l-3.5 6z" fill="#111"/></svg>
<div class="a" style="left:714px;top:981px;width:598px;height:17px;background:linear-gradient(#f2f2f2,#d8dadc 60%,#a9adb2)"></div>
<div class="a" style="left:714px;top:982px;width:16px;height:16px;background:linear-gradient(#ffffff,#ececec);border:1px solid #b4b4b4"></div>
<svg class="a" style="left:717px;top:985px" width="10" height="10" viewBox="0 0 10 10"><path d="M2.5 5l4.5-3.5v7z" fill="#111"/></svg>
<div class="a" style="left:731px;top:982px;width:483px;height:15px;background:linear-gradient(#ffffff,#f4f4f4 50%,#e8e8e8);border:1px solid #9c9c9c;border-radius:0 0 3px 3px"></div>
<svg class="a" style="left:967px;top:985px" width="10" height="9" viewBox="0 0 10 9"><path d="M1.5 1v7M3.5 1v7M5.5 1v7M7.5 1v7" stroke="#888" stroke-width="0.8"/></svg>
<div class="a" style="left:1295px;top:982px;width:16px;height:16px;background:linear-gradient(#ffffff,#ececec);border:1px solid #b4b4b4"></div>
<svg class="a" style="left:1298px;top:985px" width="10" height="10" viewBox="0 0 10 10"><path d="M7.5 5l-4.5-3.5v7z" fill="#111"/></svg>
<div class="a" style="left:1317px;top:700px;width:601px;height:299px;background:#fff;border:1px solid #e4e4e4"></div>
<div class="a" style="left:1318px;top:701px;width:599px;height:19px;background:#a1a2a1"></div>
<div class="t" style="left:1321.0px;top:704.8px;font-size:11.5px;color:#4a4242;">Nodes</div>
<svg class="a" style="left:1905px;top:705px" width="8" height="10" viewBox="0 0 8 10"><path d="M2 0.5h4M2.5 0.5v5M5.5 0.5v5M1 5.5h6M4 5.5v4" stroke="#333" stroke-width="1" fill="none"/></svg>
<div class="a" style="left:1318px;top:741px;width:599px;height:1px;background:#b9c0c4"></div>
<div class="a" style="left:1318px;top:721px;width:38px;height:21px;background:#fff;border:1px solid #d0d0d0;border-bottom:none;border-radius:3px 3px 0 0"></div>
<div class="a" style="left:1357px;top:721px;width:38px;height:20px;background:linear-gradient(#f2f2f2,#e4e4e4);border:1px solid #cfcfcf;border-bottom:none;border-radius:3px 3px 0 0"></div>
<div class="a" style="left:1396px;top:721px;width:38px;height:20px;background:linear-gradient(#f2f2f2,#e4e4e4);border:1px solid #cfcfcf;border-bottom:none;border-radius:3px 3px 0 0"></div>
<svg class="a" style="left:1330px;top:723px" width="16" height="16" viewBox="0 0 16 16"><rect x="0.5" y="0.5" width="14" height="14" fill="#e4ecfa" stroke="#6a7ab0" stroke-width="1"/><path d="M2.5 3.5h4M8.5 3.5h4" stroke="#e02020" stroke-width="1.2"/><path d="M2.5 7h4M8.5 7h4" stroke="#2a8ae0" stroke-width="1.2"/><path d="M2.5 10.5h4M8.5 10.5h4" stroke="#b020d0" stroke-width="1.2"/></svg>
<svg class="a" style="left:1368px;top:722px" width="17" height="17" viewBox="0 0 17 17"><ellipse cx="8" cy="9.5" rx="7.5" ry="6" fill="#2a62c8"/><ellipse cx="8" cy="8" rx="7.5" ry="6" fill="#8ad0f8"/><path d="M8 8V2A7.5 6 0 0 1 15.5 8z" fill="#e84a6a"/><path d="M8 8V2A7.5 6 0 0 0 1 6z" fill="#f8d23a"/></svg>
<svg class="a" style="left:1408px;top:722px" width="15" height="17" viewBox="0 0 15 17"><path d="M1.5 0.5v16" stroke="#333" stroke-width="1.2"/><rect x="2" y="1.5" width="8" height="3" fill="#e02020"/><rect x="2" y="6.5" width="12" height="3" fill="#2a62e0"/><rect x="2" y="11.5" width="6" height="3" fill="#2aa02a"/></svg>
<div class="t" style="left:1444.0px;top:725.0px;font-size:12px;letter-spacing:0.35px;color:#1a1a2a;">Top Nodes:</div>
<div class="t" style="left:1523.0px;top:725.0px;font-size:12px;font-weight:bold;color:#0f2236;">9</div>
<div class="a" style="left:1318px;top:742px;width:599px;height:23px;background:linear-gradient(#fdfdfd,#f1f1f1 60%,#e9e9e9);border-bottom:1px solid #bcbcbc"></div>
<div class="a" style="left:1318px;top:765px;width:599px;height:19px;background:#f4f4f4"></div>
<div class="a" style="left:1318px;top:784px;width:599px;height:19px;background:#fff"></div>
<div class="a" style="left:1318px;top:803px;width:599px;height:19px;background:#f4f4f4"></div>
<div class="a" style="left:1318px;top:822px;width:599px;height:19px;background:#fff"></div>
<div class="a" style="left:1318px;top:841px;width:599px;height:19px;background:#f4f4f4"></div>
<div class="a" style="left:1318px;top:860px;width:599px;height:19px;background:#fff"></div>
<div class="a" style="left:1318px;top:879px;width:599px;height:19px;background:#f4f4f4"></div>
<div class="a" style="left:1318px;top:898px;width:599px;height:19px;background:#fff"></div>
<div class="a" style="left:1318px;top:917px;width:599px;height:19px;background:#f4f4f4"></div>
<div class="a" style="left:1318px;top:936px;width:599px;height:19px;background:#fff"></div>
<div class="a" style="left:1318px;top:955px;width:599px;height:19px;background:#f4f4f4"></div>
<div class="a" style="left:1318px;top:974px;width:599px;height:19px;background:#fff"></div>
<div class="a" style="left:1318px;top:993px;width:599px;height:5px;background:#f4f4f4"></div>
<div class="a" style="left:1339px;top:743px;width:1px;height:255px;background:#c9c9c9"></div>
<div class="a" style="left:1459px;top:743px;width:1px;height:255px;background:#c9c9c9"></div>
<div class="a" style="left:1579px;top:743px;width:1px;height:255px;background:#c9c9c9"></div>
<div class="a" style="left:1669px;top:743px;width:1px;height:255px;background:#c9c9c9"></div>
<div class="t" style="left:1346.0px;top:747.5px;font-size:11px;font-weight:bold;letter-spacing:0.5px;color:#0f2236;">Node</div>
<div class="t" style="left:1466.0px;top:747.5px;font-size:11px;font-weight:bold;letter-spacing:0.5px;color:#0f2236;">MAC</div>
<div class="t" style="left:1516.0px;top:747.5px;font-size:11px;font-weight:bold;letter-spacing:0.5px;color:#0f2236;width:150px;text-align:right;">Packets</div>
<div class="t" style="left:1748.5px;top:747.5px;font-size:11px;font-weight:bold;letter-spacing:0.5px;color:#0f2236;letter-spacing:0.6px;width:150px;text-align:right;">Bytes</div>
<svg class="a" style="left:1901px;top:750px" width="8" height="7" viewBox="0 0 8 7"><path d="M0.5 0.5h7l-3.5 6z" fill="#111"/></svg>
<div class="a" style="left:1322px;top:768px;width:14px;height:14px;background:linear-gradient(#f8f8f8,#e8e8e8);border:1px solid #8a8a8a;border-radius:1px"></div>
<div class="t" style="left:1341.0px;top:770.8px;font-size:10.5px;color:#67318e;"><span style="letter-spacing:1.15px">0.0.0.0</span></div>
<div class="t" style="left:1461.0px;top:770.8px;font-size:10.5px;color:#67318e;"><span style="letter-spacing:0.2px">Intel</span><span style="letter-spacing:1.15px">:45:</span><span style="letter-spacing:0.2px">ED</span><span style="letter-spacing:1.15px">:0</span><span style="letter-spacing:0.2px">E</span></div>
<div class="t" style="left:1467.0px;top:770.8px;font-size:10.5px;color:#67318e;width:200px;text-align:right;"><span style="letter-spacing:1.15px">11</span></div>
<div class="t" style="left:1714.0px;top:770.8px;font-size:10.5px;color:#67318e;width:200px;text-align:right;"><span style="letter-spacing:1.15px">3,308</span></div>
<div class="a" style="left:1322px;top:787px;width:14px;height:14px;background:linear-gradient(#f8f8f8,#e8e8e8);border:1px solid #8a8a8a;border-radius:1px"></div>
<div class="t" style="left:1341.0px;top:789.8px;font-size:10.5px;color:#0e0e0e;"><span style="letter-spacing:1.15px">0.0.0.0</span></div>
<div class="t" style="left:1461.0px;top:789.8px;font-size:10.5px;color:#0e0e0e;"><span style="letter-spacing:1.15px">42:45:</span><span style="letter-spacing:0.2px">DA</span><span style="letter-spacing:1.15px">:</span><span style="letter-spacing:0.2px">B</span><span style="letter-spacing:1.15px">8:</span><span style="letter-spacing:0.2px">D</span><span style="letter-spacing:1.15px">9:51</span></div>
<div class="t" style="left:1467.0px;top:789.8px;font-size:10.5px;color:#0e0e0e;width:200px;text-align:right;"><span style="letter-spacing:1.15px">17</span></div>
<div class="t" style="left:1714.0px;top:789.8px;font-size:10.5px;color:#0e0e0e;width:200px;text-align:right;"><span style="letter-spacing:1.15px">2,694</span></div>
<div class="a" style="left:1322px;top:806px;width:14px;height:14px;background:linear-gradient(#f8f8f8,#e8e8e8);border:1px solid #8a8a8a;border-radius:1px"></div>
<div class="t" style="left:1341.0px;top:808.8px;font-size:10.5px;color:#1675a3;"><span style="letter-spacing:1.15px">0.0.0.0</span></div>
<div class="t" style="left:1461.0px;top:808.8px;font-size:10.5px;color:#1675a3;"><span style="letter-spacing:1.15px">42:45:</span><span style="letter-spacing:0.2px">DA</span><span style="letter-spacing:1.15px">:06:</span><span style="letter-spacing:0.2px">EF</span><span style="letter-spacing:1.15px">:33</span></div>
<div class="t" style="left:1467.0px;top:808.8px;font-size:10.5px;color:#1675a3;width:200px;text-align:right;"><span style="letter-spacing:1.15px">14</span></div>
<div class="t" style="left:1714.0px;top:808.8px;font-size:10.5px;color:#1675a3;width:200px;text-align:right;"><span style="letter-spacing:1.15px">2,546</span></div>
<div class="a" style="left:1322px;top:825px;width:14px;height:14px;background:linear-gradient(#f8f8f8,#e8e8e8);border:1px solid #8a8a8a;border-radius:1px"></div>
<div class="t" style="left:1341.0px;top:827.8px;font-size:10.5px;color:#491212;"><span style="letter-spacing:1.15px">0.0.0.0</span></div>
<div class="t" style="left:1461.0px;top:827.8px;font-size:10.5px;color:#491212;"><span style="letter-spacing:0.2px">F</span><span style="letter-spacing:1.15px">4:</span><span style="letter-spacing:0.2px">CB</span><span style="letter-spacing:1.15px">:52:3</span><span style="letter-spacing:0.2px">C</span><span style="letter-spacing:1.15px">:</span><span style="letter-spacing:0.2px">E</span><span style="letter-spacing:1.15px">6:</span><span style="letter-spacing:0.2px">F</span><span style="letter-spacing:1.15px">9</span></div>
<div class="t" style="left:1467.0px;top:827.8px;font-size:10.5px;color:#491212;width:200px;text-align:right;"><span style="letter-spacing:1.15px">7</span></div>
<div class="t" style="left:1714.0px;top:827.8px;font-size:10.5px;color:#491212;width:200px;text-align:right;"><span style="letter-spacing:1.15px">2,520</span></div>
<div class="a" style="left:1322px;top:844px;width:14px;height:14px;background:linear-gradient(#f8f8f8,#e8e8e8);border:1px solid #8a8a8a;border-radius:1px"></div>
<div class="t" style="left:1341.0px;top:846.8px;font-size:10.5px;color:#14958e;"><span style="letter-spacing:1.15px">0.0.0.0</span></div>
<div class="t" style="left:1461.0px;top:846.8px;font-size:10.5px;color:#14958e;"><span style="letter-spacing:0.2px">E</span><span style="letter-spacing:1.15px">0:9</span><span style="letter-spacing:0.2px">D</span><span style="letter-spacing:1.15px">:31:41:</span><span style="letter-spacing:0.2px">E</span><span style="letter-spacing:1.15px">6:</span><span style="letter-spacing:0.2px">D</span><span style="letter-spacing:1.15px">8</span></div>
<div class="t" style="left:1467.0px;top:846.8px;font-size:10.5px;color:#14958e;width:200px;text-align:right;"><span style="letter-spacing:1.15px">8</span></div>
<div class="t" style="left:1714.0px;top:846.8px;font-size:10.5px;color:#14958e;width:200px;text-align:right;"><span style="letter-spacing:1.15px">2,175</span></div>
<div class="a" style="left:1322px;top:863px;width:14px;height:14px;background:linear-gradient(#f8f8f8,#e8e8e8);border:1px solid #8a8a8a;border-radius:1px"></div>
<div class="t" style="left:1341.0px;top:865.8px;font-size:10.5px;color:#12126b;"><span style="letter-spacing:1.15px">0.0.0.0</span></div>
<div class="t" style="left:1461.0px;top:865.8px;font-size:10.5px;color:#12126b;"><span style="letter-spacing:0.2px">Ethernet Broadcast</span></div>
<div class="t" style="left:1467.0px;top:865.8px;font-size:10.5px;color:#12126b;width:200px;text-align:right;"><span style="letter-spacing:1.15px">7</span></div>
<div class="t" style="left:1714.0px;top:865.8px;font-size:10.5px;color:#12126b;width:200px;text-align:right;"><span style="letter-spacing:1.15px">1,694</span></div>
<div class="a" style="left:1322px;top:882px;width:14px;height:14px;background:linear-gradient(#f8f8f8,#e8e8e8);border:1px solid #8a8a8a;border-radius:1px"></div>
<div class="t" style="left:1341.0px;top:884.8px;font-size:10.5px;color:#82124a;"><span style="letter-spacing:1.15px">0.0.0.0</span></div>
<div class="t" style="left:1461.0px;top:884.8px;font-size:10.5px;color:#82124a;"><span style="letter-spacing:1.15px">42:45:</span><span style="letter-spacing:0.2px">DA</span><span style="letter-spacing:1.15px">:</span><span style="letter-spacing:0.2px">B</span><span style="letter-spacing:1.15px">8:59:51</span></div>
<div class="t" style="left:1467.0px;top:884.8px;font-size:10.5px;color:#82124a;width:200px;text-align:right;"><span style="letter-spacing:1.15px">11</span></div>
<div class="t" style="left:1714.0px;top:884.8px;font-size:10.5px;color:#82124a;width:200px;text-align:right;"><span style="letter-spacing:1.15px">1,651</span></div>
<div class="a" style="left:1322px;top:901px;width:14px;height:14px;background:linear-gradient(#f8f8f8,#e8e8e8);border:1px solid #8a8a8a;border-radius:1px"></div>
<div class="t" style="left:1341.0px;top:903.8px;font-size:10.5px;color:#5a3d11;"><span style="letter-spacing:1.15px">0.0.0.0</span></div>
<div class="t" style="left:1461.0px;top:903.8px;font-size:10.5px;color:#5a3d11;"><span style="letter-spacing:1.15px">42:45:</span><span style="letter-spacing:0.2px">DA</span><span style="letter-spacing:1.15px">:06:6</span><span style="letter-spacing:0.2px">F</span><span style="letter-spacing:1.15px">:33</span></div>
<div class="t" style="left:1467.0px;top:903.8px;font-size:10.5px;color:#5a3d11;width:200px;text-align:right;"><span style="letter-spacing:1.15px">5</span></div>
<div class="t" style="left:1714.0px;top:903.8px;font-size:10.5px;color:#5a3d11;width:200px;text-align:right;"><span style="letter-spacing:1.15px">561</span></div>
<div class="a" style="left:1322px;top:920px;width:14px;height:14px;background:linear-gradient(#f8f8f8,#e8e8e8);border:1px solid #8a8a8a;border-radius:1px"></div>
<div class="t" style="left:1341.0px;top:922.8px;font-size:10.5px;color:#121231;"><span style="letter-spacing:1.15px">0.0.0.0</span></div>
<div class="t" style="left:1461.0px;top:922.8px;font-size:10.5px;color:#121231;"><span style="letter-spacing:0.2px">IPv</span><span style="letter-spacing:1.15px">6</span><span style="letter-spacing:0.2px">mcast</span><span style="letter-spacing:1.15px">:00:00:0...</span></div>
<div class="t" style="left:1467.0px;top:922.8px;font-size:10.5px;color:#121231;width:200px;text-align:right;"><span style="letter-spacing:1.15px">1</span></div>
<div class="t" style="left:1714.0px;top:922.8px;font-size:10.5px;color:#121231;width:200px;text-align:right;"><span style="letter-spacing:1.15px">128</span></div>
<div class="t" style="left:1676.0px;top:946.5px;font-size:21px;color:rgba(150,150,150,0.75);">Windows</div>
<div class="t" style="left:1750.0px;top:972.8px;font-size:15.5px;color:rgba(150,150,150,0.75);">Windows。</div>
<svg class="a" style="left:1629px;top:947px" width="20" height="20" viewBox="-0.5 -0.5 11 11" preserveAspectRatio="none"><g fill="none" stroke="#c6c6c6" stroke-width="1.0" stroke-linecap="round" stroke-linejoin="round"><path d="M0.8 1.5L1.6 2.3"/><path d="M0.5 4.2L1.3 4.9"/><path d="M0.5 9.3L1.8 6.2"/><path d="M4.3 0L4 0.8"/><path d="M3 0.8H5.8V4.5H3Z"/><path d="M3 2.7H5.8"/><path d="M2.8 5.8H6"/><path d="M4.2 5.8V6.5"/><path d="M3.5 6.7H5.6L5.4 9.6L4.8 9.3"/><path d="M3.9 6.9L2.8 9.6"/><path d="M7.5 0.3L6.8 2.8"/><path d="M7 2.3H9.8"/><path d="M9.2 2.5L6.3 9.7"/><path d="M7.4 5.2L9.9 9.6"/></g></svg>
<svg class="a" style="left:1649px;top:947px" width="20" height="20" viewBox="-0.5 -0.5 11 11" preserveAspectRatio="none"><g fill="none" stroke="#c6c6c6" stroke-width="1.0" stroke-linecap="round" stroke-linejoin="round"><path d="M0.8 1.5L1.6 2.3"/><path d="M0.5 4.2L1.3 4.9"/><path d="M0.5 9.3L1.8 6.2"/><path d="M8.8 0.5L4 1.6"/><path d="M3.2 3.6H9.8"/><path d="M6.5 1.3V5.8"/><path d="M4 5.8H9V9.6H4Z"/></g></svg>
<svg class="a" style="left:1629px;top:973.5px" width="15" height="15" viewBox="-0.5 -0.5 11 11" preserveAspectRatio="none"><g fill="none" stroke="#c6c6c6" stroke-width="1.0" stroke-linecap="round" stroke-linejoin="round"><path d="M0.3 1.8H4"/><path d="M2 0.3L0.6 5.3H4"/><path d="M2.3 3.2V9.8"/><path d="M0.2 7.4L4.2 6.9"/><path d="M5 2H9.6"/><path d="M4.6 4.4H9.9"/><path d="M7.5 0.2L6.3 6.3H9.3L7.2 8.6"/><path d="M6.8 8L8.8 9.8"/></g></svg>
<svg class="a" style="left:1644px;top:973.5px" width="15" height="15" viewBox="-0.5 -0.5 11 11" preserveAspectRatio="none"><g fill="none" stroke="#c6c6c6" stroke-width="1.0" stroke-linecap="round" stroke-linejoin="round"><path d="M0.3 1.2H6.2"/><path d="M3.5 1.2L1.2 4.2L5.5 3.8"/><path d="M4.7 2.8L5.8 4.5"/><path d="M1 6.2H5.8"/><path d="M3.4 4.2V9.2"/><path d="M0.2 9.3H6.5"/><path d="M7.6 1.5V7.5"/><path d="M9.4 0.3V9.6L8.6 9.2"/></g></svg>
<svg class="a" style="left:1659px;top:973.5px" width="15" height="15" viewBox="-0.5 -0.5 11 11" preserveAspectRatio="none"><g fill="none" stroke="#c6c6c6" stroke-width="1.0" stroke-linecap="round" stroke-linejoin="round"><path d="M1.5 0.5L0.8 2.5"/><path d="M4 0.5L3.3 2.5"/></g></svg>
<svg class="a" style="left:1666px;top:973.5px" width="15" height="15" viewBox="-0.5 -0.5 11 11" preserveAspectRatio="none"><g fill="none" stroke="#c6c6c6" stroke-width="1.0" stroke-linecap="round" stroke-linejoin="round"><path d="M0.8 0.6L1.8 1.8"/><path d="M0.3 4.2H1.6V9L3 7.8"/><path d="M4.6 0.8L4.4 4L3.6 5"/><path d="M4.6 0.8H8V3.8L9.6 4"/><path d="M4 5.6H9L4 9.8"/><path d="M5.2 6.8L9.9 9.8"/></g></svg>
<svg class="a" style="left:1681px;top:973.5px" width="15" height="15" viewBox="-0.5 -0.5 11 11" preserveAspectRatio="none"><g fill="none" stroke="#c6c6c6" stroke-width="1.0" stroke-linecap="round" stroke-linejoin="round"><path d="M1 0.5H9V2.8H1Z"/><path d="M3.7 0.5V2.8"/><path d="M6.3 0.5V2.8"/><path d="M0.3 3.8H9.7"/><path d="M5 2.8V4.8"/><path d="M2.5 4.8H7.5V8.6H2.5Z"/><path d="M2.5 6H7.5"/><path d="M2.5 7.3H7.5"/><path d="M1.3 4.5V9.6H9.8"/></g></svg>
<svg class="a" style="left:1696px;top:973.5px" width="15" height="15" viewBox="-0.5 -0.5 11 11" preserveAspectRatio="none"><g fill="none" stroke="#c6c6c6" stroke-width="1.0" stroke-linecap="round" stroke-linejoin="round"><path d="M1.5 0.5L0.8 2.5"/><path d="M4 0.5L3.3 2.5"/></g></svg>
<svg class="a" style="left:1702px;top:973.5px" width="15" height="15" viewBox="-0.5 -0.5 11 11" preserveAspectRatio="none"><g fill="none" stroke="#c6c6c6" stroke-width="1.0" stroke-linecap="round" stroke-linejoin="round"><path d="M1.5 1.5V8.5L4.8 6.3"/><path d="M3 2.5L4.2 4.8"/><path d="M8.2 0.5V4.5L5.2 9.7"/><path d="M6.8 6.6L9.8 9.7"/></g></svg>
<svg class="a" style="left:1717px;top:973.5px" width="15" height="15" viewBox="-0.5 -0.5 11 11" preserveAspectRatio="none"><g fill="none" stroke="#c6c6c6" stroke-width="1.0" stroke-linecap="round" stroke-linejoin="round"><path d="M0.8 1.5L1.6 2.3"/><path d="M0.5 4.2L1.3 4.9"/><path d="M0.5 9.3L1.8 6.2"/><path d="M4.3 0L4 0.8"/><path d="M3 0.8H5.8V4.5H3Z"/><path d="M3 2.7H5.8"/><path d="M2.8 5.8H6"/><path d="M4.2 5.8V6.5"/><path d="M3.5 6.7H5.6L5.4 9.6L4.8 9.3"/><path d="M3.9 6.9L2.8 9.6"/><path d="M7.5 0.3L6.8 2.8"/><path d="M7 2.3H9.8"/><path d="M9.2 2.5L6.3 9.7"/><path d="M7.4 5.2L9.9 9.6"/></g></svg>
<svg class="a" style="left:1732px;top:973.5px" width="15" height="15" viewBox="-0.5 -0.5 11 11" preserveAspectRatio="none"><g fill="none" stroke="#c6c6c6" stroke-width="1.0" stroke-linecap="round" stroke-linejoin="round"><path d="M0.8 1.5L1.6 2.3"/><path d="M0.5 4.2L1.3 4.9"/><path d="M0.5 9.3L1.8 6.2"/><path d="M8.8 0.5L4 1.6"/><path d="M3.2 3.6H9.8"/><path d="M6.5 1.3V5.8"/><path d="M4 5.8H9V9.6H4Z"/></g></svg>
<div class="a" style="left:112px;top:1002px;width:76px;height:19px;background:linear-gradient(#fcd77a,#fde6a8 60%,#fff2cc)"></div>
<div class="t" style="left:117.0px;top:1006.8px;font-size:11.5px;color:#4a4a4a;">Channels</div>
<div class="a" style="left:202px;top:1002px;width:58px;height:19px;background:linear-gradient(#fcd77a,#fde6a8 60%,#fff2cc)"></div>
<div class="t" style="left:207.0px;top:1006.8px;font-size:11.5px;color:#4a4a4a;">WLAN</div>
<div class="a" style="left:274px;top:1002px;width:84px;height:19px;background:linear-gradient(#fcd77a,#fde6a8 60%,#fff2cc)"></div>
<div class="t" style="left:279.0px;top:1006.8px;font-size:11.5px;color:#4a4a4a;">Data Rates</div>
<div class="a" style="left:372px;top:1002px;width:91px;height:19px;background:linear-gradient(#fcd77a,#fde6a8 60%,#fff2cc)"></div>
<div class="t" style="left:377.0px;top:1006.8px;font-size:11.5px;color:#4a4a4a;">Applications</div>
<div class="a" style="left:477px;top:1002px;width:79px;height:19px;background:linear-gradient(#fcd77a,#fde6a8 60%,#fff2cc)"></div>
<div class="t" style="left:482.0px;top:1006.8px;font-size:11.5px;color:#4a4a4a;">Countries</div>
<!-- /BOTTOM -->
<div id="status" class="a"><div class="a" style="left:0;top:19px;width:1918px;height:1px;background:#1e3038"></div><div class="a" style="left:46px;top:19px;width:344px;height:1px;background:#d4d4d4"></div><div class="a" style="left:932px;top:19px;width:48px;height:1px;background:#6a7a80"></div><div class="t" style="left:2px;top:6px;font-size:11.3px">For Help, press F1</div></div>
</body></html>
